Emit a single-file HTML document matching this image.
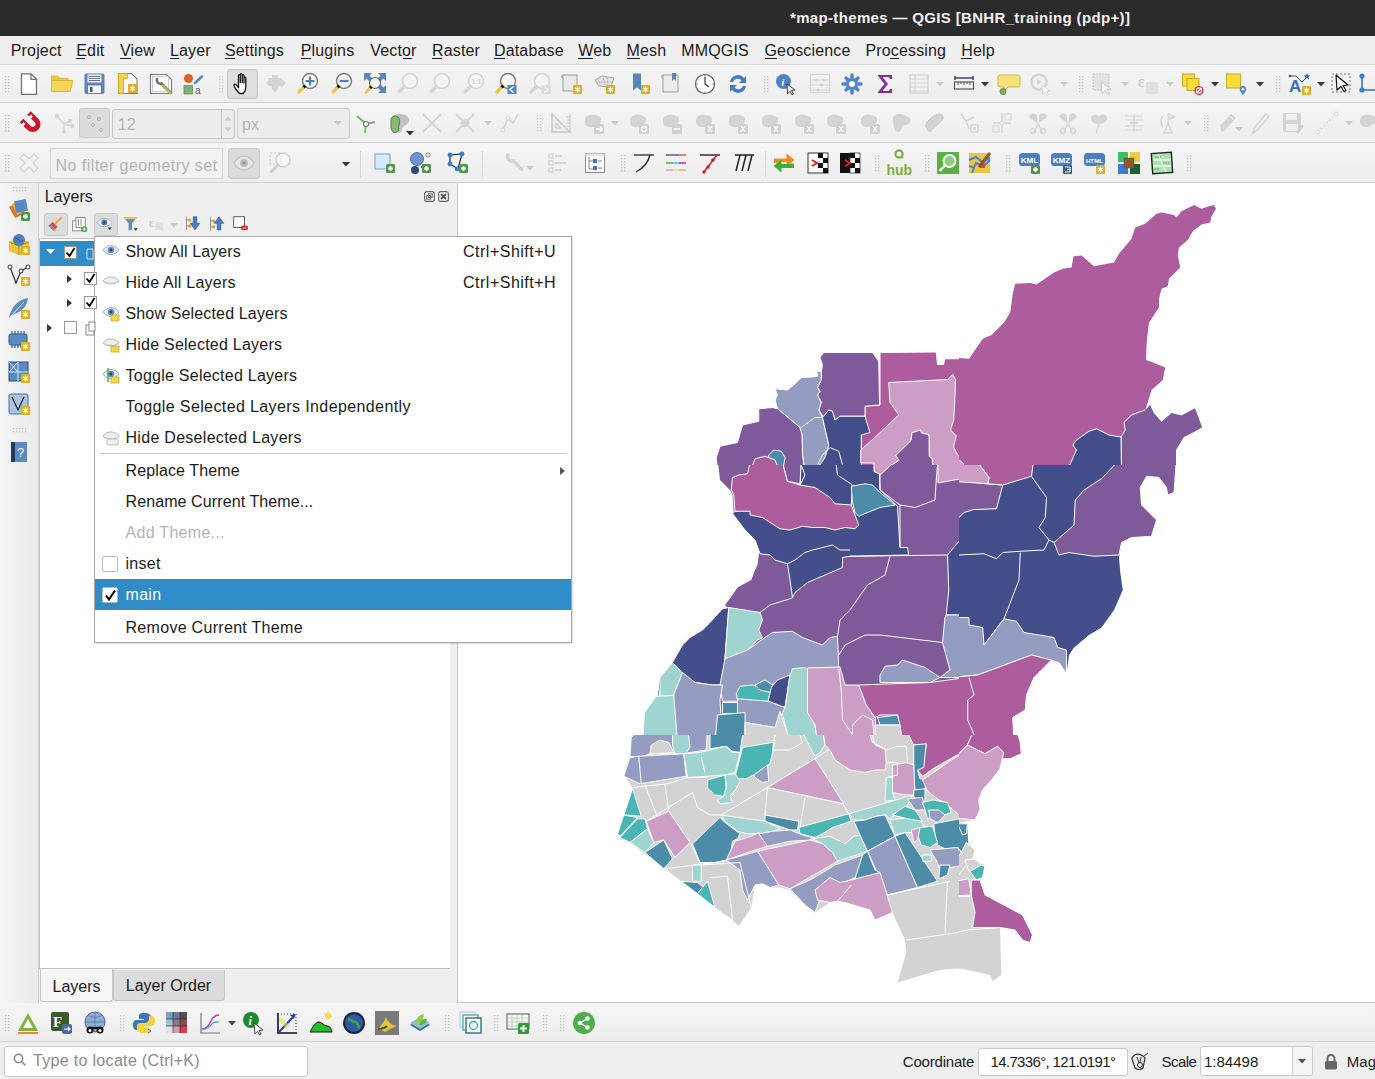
<!DOCTYPE html>
<html><head><meta charset="utf-8">
<style>
*{margin:0;padding:0;box-sizing:border-box}
html,body{width:1375px;height:1079px;overflow:hidden;background:#efefef;font-family:"Liberation Sans",sans-serif;color:#1b1b1b}
.a{position:absolute}
.t{position:absolute;white-space:nowrap}
svg{position:absolute;overflow:visible}
</style></head><body>
<div class="a" style="left:0px;top:0px;width:1375px;height:36px;background:#2b2b2b"></div>
<div class="t" style="left:790px;top:7.80px;font-size:15px;line-height:20px;color:#f0f0f0;font-weight:bold;letter-spacing:0.34px">*map-themes — QGIS [BNHR_training (pdp+)]</div>
<div class="a" style="left:0px;top:36px;width:1375px;height:29px;background:#efefef"></div>
<div class="a" style="left:0px;top:64px;width:1375px;height:1px;background:#d9d9d9"></div>
<div class="t" style="left:10.8px;top:41.46px;font-size:16px;line-height:20px;color:#1b1b1b;letter-spacing:0.15px">Project</div>
<div class="t" style="left:76.3px;top:41.46px;font-size:16px;line-height:20px;color:#1b1b1b;letter-spacing:0.15px">Edit</div>
<div class="t" style="left:120px;top:41.46px;font-size:16px;line-height:20px;color:#1b1b1b;letter-spacing:0.15px">View</div>
<div class="t" style="left:170px;top:41.46px;font-size:16px;line-height:20px;color:#1b1b1b;letter-spacing:0.15px">Layer</div>
<div class="t" style="left:225px;top:41.46px;font-size:16px;line-height:20px;color:#1b1b1b;letter-spacing:0.15px">Settings</div>
<div class="t" style="left:300.8px;top:41.46px;font-size:16px;line-height:20px;color:#1b1b1b;letter-spacing:0.15px">Plugins</div>
<div class="t" style="left:370.3px;top:41.46px;font-size:16px;line-height:20px;color:#1b1b1b;letter-spacing:0.15px">Vector</div>
<div class="t" style="left:432px;top:41.46px;font-size:16px;line-height:20px;color:#1b1b1b;letter-spacing:0.15px">Raster</div>
<div class="t" style="left:494px;top:41.46px;font-size:16px;line-height:20px;color:#1b1b1b;letter-spacing:0.15px">Database</div>
<div class="t" style="left:578.3px;top:41.46px;font-size:16px;line-height:20px;color:#1b1b1b;letter-spacing:0.15px">Web</div>
<div class="t" style="left:626.5px;top:41.46px;font-size:16px;line-height:20px;color:#1b1b1b;letter-spacing:0.15px">Mesh</div>
<div class="t" style="left:681.3px;top:41.46px;font-size:16px;line-height:20px;color:#1b1b1b;letter-spacing:0.15px">MMQGIS</div>
<div class="t" style="left:764.5px;top:41.46px;font-size:16px;line-height:20px;color:#1b1b1b;letter-spacing:0.15px">Geoscience</div>
<div class="t" style="left:865.5px;top:41.46px;font-size:16px;line-height:20px;color:#1b1b1b;letter-spacing:0.15px">Processing</div>
<div class="t" style="left:961.3px;top:41.46px;font-size:16px;line-height:20px;color:#1b1b1b;letter-spacing:0.15px">Help</div>
<div class="a" style="left:76.3px;top:58px;width:9px;height:1px;background:#1b1b1b"></div>
<div class="a" style="left:120px;top:58px;width:11px;height:1px;background:#1b1b1b"></div>
<div class="a" style="left:170px;top:58px;width:9px;height:1px;background:#1b1b1b"></div>
<div class="a" style="left:225px;top:58px;width:10px;height:1px;background:#1b1b1b"></div>
<div class="a" style="left:300.8px;top:58px;width:10px;height:1px;background:#1b1b1b"></div>
<div class="a" style="left:403px;top:58px;width:9px;height:1px;background:#1b1b1b"></div>
<div class="a" style="left:432px;top:58px;width:10px;height:1px;background:#1b1b1b"></div>
<div class="a" style="left:494px;top:58px;width:11px;height:1px;background:#1b1b1b"></div>
<div class="a" style="left:578.3px;top:58px;width:15px;height:1px;background:#1b1b1b"></div>
<div class="a" style="left:626.5px;top:58px;width:13px;height:1px;background:#1b1b1b"></div>
<div class="a" style="left:764.5px;top:58px;width:12px;height:1px;background:#1b1b1b"></div>
<div class="a" style="left:890px;top:58px;width:9px;height:1px;background:#1b1b1b"></div>
<div class="a" style="left:961.3px;top:58px;width:11px;height:1px;background:#1b1b1b"></div>

<div class="a" style="left:0px;top:65px;width:1375px;height:38px;background:linear-gradient(#f5f5f5,#ededed)"></div>
<div class="a" style="left:0px;top:102px;width:1375px;height:1px;background:#d2d2d2"></div>
<div class="a" style="left:0px;top:103px;width:1375px;height:40px;background:linear-gradient(#f5f5f5,#ededed)"></div>
<div class="a" style="left:0px;top:142px;width:1375px;height:1px;background:#d2d2d2"></div>
<div class="a" style="left:0px;top:143px;width:1375px;height:40px;background:linear-gradient(#f5f5f5,#ededed)"></div>
<div class="a" style="left:0px;top:182px;width:1375px;height:1px;background:#d2d2d2"></div>
<div class="a" style="left:79px;top:108px;width:31px;height:30px;background:#dcdcdc;border:1px solid #c8c8c8;border-radius:3px"></div>
<div class="a" style="left:112px;top:109px;width:123px;height:30px;background:#ececec;border:1px solid #c4c4c4;border-radius:3px"></div>
<div class="a" style="left:221px;top:110px;width:1px;height:28px;background:#c4c4c4"></div>
<div class="t" style="left:117.8px;top:115.46px;font-size:16px;line-height:20px;color:#b4b4b4">12</div>
<div class="a" style="left:237px;top:108px;width:113px;height:31px;background:#ececec;border:1px solid #cdcdcd;border-radius:3px"></div>
<div class="t" style="left:242px;top:115.46px;font-size:16px;line-height:20px;color:#b4b4b4">px</div>
<div class="a" style="left:50px;top:148px;width:173px;height:31px;background:#f2f2f2;border:1px solid #d6d6d6"></div>
<div class="t" style="left:55.5px;top:155.66px;font-size:16px;line-height:20px;color:#b2b2b2;letter-spacing:0.45px">No filter geometry set</div>
<div class="a" style="left:228px;top:148px;width:32px;height:31px;background:#dcdcdc;border:1px solid #cacaca;border-radius:3px"></div>
<div class="a" style="left:227px;top:69px;width:31px;height:30px;background:#dedede;border:1px solid #c4c4c4;border-radius:3px"></div>
<div class="a" style="left:0px;top:183px;width:38px;height:820px;background:linear-gradient(90deg,#f4f4f4,#ebebeb)"></div>
<div class="a" style="left:38px;top:183px;width:1px;height:820px;background:#d4d4d4"></div>
<div class="a" style="left:39px;top:183px;width:418px;height:820px;background:#efefef"></div>
<div class="t" style="left:44.7px;top:186.76px;font-size:16px;line-height:20px;color:#1b1b1b">Layers</div>
<div class="a" style="left:44px;top:213px;width:24px;height:23px;background:#dcdcdc;border:1px solid #c6c6c6;border-radius:3px"></div>
<div class="a" style="left:94px;top:213px;width:24px;height:23px;background:#dcdcdc;border:1px solid #c6c6c6;border-radius:3px"></div>
<div class="a" style="left:39px;top:238px;width:412px;height:731px;background:#fff;border:1px solid #c2c2c2"></div>
<div class="a" style="left:40px;top:241px;width:410px;height:25px;background:#308cc6"></div>
<div class="a" style="left:113px;top:970px;width:112px;height:31px;background:#dcdcdc;border:1px solid #c6c6c6;border-top:none;border-radius:0 0 3px 3px"></div>
<div class="a" style="left:40px;top:969px;width:73px;height:33px;background:#f6f6f6;border:1px solid #c6c6c6;border-top:none;border-radius:0 0 3px 3px"></div>
<div class="t" style="left:52.5px;top:977.46px;font-size:16px;line-height:20px;color:#1b1b1b">Layers</div>
<div class="t" style="left:125.8px;top:976.26px;font-size:16px;line-height:20px;color:#1b1b1b">Layer Order</div>
<div class="a" style="left:450px;top:183px;width:7px;height:820px;background:#efefef"></div>
<div class="a" style="left:457px;top:183px;width:918px;height:820px;background:#fff"></div>
<div class="a" style="left:457px;top:183px;width:1px;height:820px;background:#c8c8c8"></div>
<div class="a" style="left:457px;top:1002px;width:918px;height:1px;background:#c8c8c8"></div>
<svg class="a" style="left:0;top:0" width="1375" height="1079" viewBox="0 0 1375 1079"><defs><clipPath id="c0"><rect x="615" y="195" width="344" height="270"/></clipPath><clipPath id="c1"><rect x="959" y="195" width="344" height="270"/></clipPath><clipPath id="c2"><rect x="615" y="465" width="344" height="270"/></clipPath><clipPath id="c3"><rect x="959" y="465" width="344" height="270"/></clipPath><clipPath id="c4"><rect x="615" y="735" width="344" height="270"/></clipPath><clipPath id="c5"><rect x="959" y="735" width="344" height="270"/></clipPath></defs><g clip-path="url(#c0)"><g transform="translate(615,195) scale(0.25)"><polygon fill="#ad5c9e" stroke="#fff" stroke-width="4" stroke-linejoin="round" points="1060,630 1285,628 1290,678 1315,678 1318,655 1405,655 1405,1109 985,1109 985,960 1000,900 1000,845 1060,840"/><polygon fill="#7e5a9b" stroke="#fff" stroke-width="4" stroke-linejoin="round" points="820,650 835,630 1030,630 1055,665 1058,840 1000,845 1000,885 900,885 880,900 870,865 855,860 835,890 815,860 825,830 810,800 820,785 810,770 825,740 825,705 830,680"/><polygon fill="#959cc2" stroke="#fff" stroke-width="4" stroke-linejoin="round" points="640,775 690,780 720,755 745,730 790,728 810,725 808,705 825,705 825,740 810,770 820,785 810,800 825,830 815,860 830,890 855,1000 840,1050 800,1109 760,1109 750,1040 748,960 740,930 710,905 680,880 650,855 640,820 650,800"/><polyline fill="none" stroke="#fff" stroke-width="4" stroke-linejoin="round" points="745,930 800,890 830,890"/><polygon fill="#7e5a9b" stroke="#fff" stroke-width="4" stroke-linejoin="round" points="410,1109 405,1050 420,1005 490,990 510,920 575,905 575,855 630,850 650,855 680,880 740,930 748,960 750,1040 760,1109"/><polygon fill="#434e8a" stroke="#fff" stroke-width="4" stroke-linejoin="round" points="830,890 855,860 870,865 880,900 900,885 1000,885 1020,950 985,960 985,1109 800,1109 840,1050 855,1000"/><polyline fill="none" stroke="#fff" stroke-width="4" stroke-linejoin="round" points="810,1079 830,1040 860,1010 895,1025 910,1079"/><polygon fill="#4d8ca8" stroke="#fff" stroke-width="4" stroke-linejoin="round" points="615,1040 635,1020 665,1025 680,1050 670,1109 615,1109"/><polygon fill="#ad5c9e" stroke="#fff" stroke-width="4" stroke-linejoin="round" points="540,1109 560,1055 600,1045 640,1060 660,1109"/><polygon fill="#cc9ec5" stroke="#fff" stroke-width="4" stroke-linejoin="round" points="1095,750 1330,738 1352,718 1362,740 1360,800 1355,900 1342,940 1365,963 1354,1008 1369,1038 1405,1072 1405,1109 1292,1109 1290,1109 1271,1109 1269,1054 1257,1046 1256,959 1225,951 1222,940 1188,951 1184,982 1123,1042 1136,1061 1063,1109 1036,1109 1036,1072 983,1072 983,1020 1050,960 1135,880 1100,830"/><polygon fill="#7e5a9b" stroke="#fff" stroke-width="4" stroke-linejoin="round" points="1063,1109 1136,1061 1123,1042 1184,982 1188,951 1222,940 1225,951 1256,959 1257,1046 1269,1054 1271,1109 1290,1109 1292,1109 1063,1109"/></g></g><g clip-path="url(#c1)"><g transform="translate(959,195) scale(0.25)"><polygon fill="#ad5c9e" points="-30,650 40,655 95,575 130,560 180,510 205,470 215,395 225,355 285,352 310,358 380,310 415,295 450,290 458,245 490,242 540,285 620,270 640,235 690,175 705,130 745,115 790,75 810,70 860,80 870,90 890,65 940,40 970,55 1000,45 1020,40 1028,55 1010,85 1005,110 970,118 935,145 915,180 880,210 875,240 885,290 865,310 840,335 835,365 810,375 800,415 800,450 760,510 755,550 750,600 748,660 770,668 825,690 815,740 770,780 755,830 745,860 690,880 660,910 665,940 648,968 600,960 550,935 520,945 470,980 455,1000 470,1020 440,1109 -30,1109"/><polygon fill="#7e5a9b" stroke="#fff" stroke-width="4" stroke-linejoin="round" points="648,968 665,940 660,910 690,880 745,860 765,835 780,870 810,905 850,870 890,880 945,850 975,930 940,950 900,970 870,1020 870,1109 650,1109"/><polygon fill="#434e8a" stroke="#fff" stroke-width="4" stroke-linejoin="round" points="470,980 520,945 550,935 600,960 648,968 650,1109 430,1109 470,1020 455,1000"/><polygon fill="#cc9ec5" stroke="#fff" stroke-width="4" stroke-linejoin="round" points="-30,1000 -30,1038 16,1072 30,1109 -30,1109"/></g></g><g clip-path="url(#c2)"><g transform="translate(615,465) scale(0.25)"><polygon fill="#7e5a9b" points="410,-30 420,60 460,100 470,120 475,190 490,220 520,260 560,300 580,340 575,360 570,400 560,420 545,460 490,490 470,520 440,560 450,570 430,575 380,630 350,660 300,690 270,720 230,790 180,850 170,930 130,990 110,1109 1405,1109 1405,-30"/><polygon fill="#434e8a" stroke="#fff" stroke-width="4" stroke-linejoin="round" points="745,-30 1055,-30 1060,100 1130,165 1140,330 1170,330 1175,360 940,365 910,370 910,410 840,440 770,470 720,510 710,530 700,460 690,395 640,380 620,360 580,355 560,300 520,260 490,220 470,195 480,185 700,150 740,80"/><polyline fill="none" stroke="#fff" stroke-width="4" stroke-linejoin="round" points="745,0 760,40 740,80"/><polyline fill="none" stroke="#fff" stroke-width="4" stroke-linejoin="round" points="885,0 890,40 950,80 945,160"/><polygon fill="#ad5c9e" stroke="#fff" stroke-width="4" stroke-linejoin="round" points="470,50 495,40 530,35 545,-30 665,-30 690,65 740,80 800,90 860,130 880,155 945,160 960,200 975,240 960,255 920,250 880,260 840,250 790,250 750,245 700,260 660,255 620,230 590,210 540,200 540,185 480,185 475,120 465,100"/><polygon fill="#7e5a9b" stroke="#fff" stroke-width="4" stroke-linejoin="round" points="665,-30 745,-30 740,75 690,65"/><polyline fill="none" stroke="#fff" stroke-width="4" stroke-linejoin="round" points="690,395 720,380 760,350 790,340 830,330 870,320 900,340 940,340"/><polygon fill="#4d8ca8" stroke="#fff" stroke-width="4" stroke-linejoin="round" points="945,85 1000,75 1030,80 1060,110 1085,130 1120,160 1060,170 1010,190 975,205 960,190 950,150"/><polyline fill="none" stroke="#fff" stroke-width="4" stroke-linejoin="round" points="1060,0 1060,100 1140,160 1200,170 1280,140 1285,60 1290,0"/><polyline fill="none" stroke="#fff" stroke-width="4" stroke-linejoin="round" points="1140,160 1140,330"/><polygon fill="#cc9ec5" stroke="#fff" stroke-width="4" stroke-linejoin="round" points="983,-30 983,-30 1036,-30 1036,26 1063,38 1136,-30 1123,-30 1184,-30 983,-30"/><polygon fill="#cc9ec5" stroke="#fff" stroke-width="4" stroke-linejoin="round" points="1292,-30 1405,-30 1405,72 1373,57 1292,72"/><polyline fill="none" stroke="#fff" stroke-width="4" stroke-linejoin="round" points="580,590 620,560 700,535 710,530"/><polyline fill="none" stroke="#fff" stroke-width="4" stroke-linejoin="round" points="890,685 900,620 940,580 1010,480 1080,440 1100,365"/><polyline fill="none" stroke="#fff" stroke-width="4" stroke-linejoin="round" points="940,365 1330,360 1375,360"/><polyline fill="none" stroke="#fff" stroke-width="4" stroke-linejoin="round" points="895,760 920,720 1000,680 1060,680 1310,710"/><polygon fill="#434e8a" stroke="#fff" stroke-width="4" stroke-linejoin="round" points="1330,360 1405,270 1405,600 1325,600 1335,500"/><polygon fill="#434e8a" stroke="#fff" stroke-width="4" stroke-linejoin="round" points="230,790 270,720 300,690 350,660 380,630 430,575 455,570 440,770 430,880 390,880 320,870 280,850 250,820"/><polygon fill="#9fd4d1" stroke="#fff" stroke-width="4" stroke-linejoin="round" points="455,570 580,590 590,620 575,660 590,690 570,700 530,740 470,775 440,775"/><polygon fill="#959cc2" stroke="#fff" stroke-width="4" stroke-linejoin="round" points="440,775 530,740 600,690 630,670 710,665 750,690 830,720 860,690 890,685 895,815 780,815 700,840 690,850 625,880 610,955 490,945 430,945 420,880"/><polygon fill="#9fd4d1" stroke="#fff" stroke-width="4" stroke-linejoin="round" points="180,850 230,790 270,830 235,920 180,930"/><polygon fill="#4d8ca8" stroke="#fff" stroke-width="4" stroke-linejoin="round" points="170,870 180,930 235,920 230,945 170,950"/><polygon fill="#959cc2" stroke="#fff" stroke-width="4" stroke-linejoin="round" points="235,920 270,830 320,870 390,880 430,880 420,940 430,1109 250,1109 230,960"/><polygon fill="#9fd4d1" stroke="#fff" stroke-width="4" stroke-linejoin="round" points="110,1109 118,990 165,925 235,922 250,1109"/><polygon fill="#4bb5b3" stroke="#fff" stroke-width="4" stroke-linejoin="round" points="485,915 500,885 550,880 580,890 600,880 625,890 610,955 560,950 490,940"/><polygon fill="#4d8ca8" stroke="#fff" stroke-width="4" stroke-linejoin="round" points="560,880 600,860 630,880 625,910 580,900"/><polygon fill="#434e8a" stroke="#fff" stroke-width="4" stroke-linejoin="round" points="610,955 625,890 650,860 700,840 680,970"/><polygon fill="#9fd4d1" stroke="#fff" stroke-width="4" stroke-linejoin="round" points="680,970 700,840 710,815 760,810 780,830 770,990 800,1040 810,1109 700,1109 665,980"/><polygon fill="#cc9ec5" stroke="#fff" stroke-width="4" stroke-linejoin="round" points="770,812 900,808 920,880 975,880 1005,960 1040,1010 1050,1109 810,1109 800,1040 770,990"/><polyline fill="none" stroke="#fff" stroke-width="4" stroke-linejoin="round" points="895,815 905,900 910,1020 950,1079"/><polygon fill="#959cc2" stroke="#fff" stroke-width="4" stroke-linejoin="round" points="1060,840 1080,805 1130,800 1150,780 1240,810 1300,850 1260,870 1060,870"/><polygon fill="#959cc2" stroke="#fff" stroke-width="4" stroke-linejoin="round" points="1325,600 1405,600 1405,850 1300,850 1340,820 1310,710 1320,610"/><polygon fill="#ad5c9e" stroke="#fff" stroke-width="4" stroke-linejoin="round" points="975,880 1260,870 1405,850 1405,1109 1150,1109 1130,1000 1060,1000 1040,1010 1005,960"/><polygon fill="#4d8ca8" stroke="#fff" stroke-width="4" stroke-linejoin="round" points="1050,1010 1130,1000 1140,1040 1060,1040"/><polygon fill="#4d8ca8" stroke="#fff" stroke-width="4" stroke-linejoin="round" points="430,950 495,950 490,995 430,995"/><polygon fill="#959cc2" stroke="#fff" stroke-width="4" stroke-linejoin="round" points="490,935 615,945 680,970 640,1050 520,1030 490,995"/><polygon fill="#4d8ca8" stroke="#fff" stroke-width="4" stroke-linejoin="round" points="410,1000 520,990 520,1109 400,1109"/><polygon fill="#d3d3d3" stroke="#fff" stroke-width="4" stroke-linejoin="round" points="520,1030 640,1050 660,985 700,1109 520,1109"/><polygon fill="#cc9ec5" stroke="#fff" stroke-width="4" stroke-linejoin="round" points="950,1040 990,1000 1030,1020 1040,1109 950,1109"/><polygon fill="#d3d3d3" stroke="#fff" stroke-width="4" stroke-linejoin="round" points="1040,1040 1140,1040 1150,1109 1040,1109"/></g></g><g clip-path="url(#c3)"><g transform="translate(959,465) scale(0.25)"><polygon fill="#434e8a" points="-30,180 20,190 60,178 150,175 175,80 290,45 300,-30 870,-30 860,110 835,120 830,90 800,50 750,45 725,90 730,160 790,220 770,285 690,290 650,310 640,370 645,430 655,500 620,580 570,650 520,680 460,730 440,760 430,835 400,790 280,760 130,820 -30,850"/><polygon fill="#7e5a9b" stroke="#fff" stroke-width="4" stroke-linejoin="round" points="380,310 460,240 465,140 500,100 570,55 650,-30 870,-30 860,110 835,120 830,90 800,50 750,45 725,90 730,160 790,220 770,285 690,290 650,310 640,360 540,365 440,350 400,360"/><polygon fill="#7e5a9b" stroke="#fff" stroke-width="4" stroke-linejoin="round" points="-30,60 110,75 175,80 150,175 60,178 20,190 -30,240"/><polygon fill="#ad5c9e" stroke="#fff" stroke-width="4" stroke-linejoin="round" points="60,-30 300,-30 290,45 175,80 115,75 120,50"/><polygon fill="#cc9ec5" stroke="#fff" stroke-width="4" stroke-linejoin="round" points="-30,-30 60,-30 120,50 115,75 -30,65"/><polyline fill="none" stroke="#fff" stroke-width="4" stroke-linejoin="round" points="290,45 350,130 345,210 320,250 360,300 380,310"/><polyline fill="none" stroke="#fff" stroke-width="4" stroke-linejoin="round" points="0,360 100,355 150,375 175,350 245,345 340,340 360,300"/><polyline fill="none" stroke="#fff" stroke-width="4" stroke-linejoin="round" points="245,350 240,460 180,615 100,720"/><polygon fill="#959cc2" stroke="#fff" stroke-width="4" stroke-linejoin="round" points="-30,610 40,610 40,640 95,650 100,720 180,615 230,625 260,670 380,690 395,730 430,740 430,835 400,790 290,760 75,840 -30,850"/><polygon fill="#ad5c9e" stroke="#fff" stroke-width="4" stroke-linejoin="round" points="-30,850 75,840 290,760 370,780 300,850 270,920 265,980 215,1010 220,1109 -30,1109"/><polyline fill="none" stroke="#fff" stroke-width="4" stroke-linejoin="round" points="40,850 60,920 35,940 35,1020 60,1079"/></g></g><g clip-path="url(#c4)"><g transform="translate(615,735) scale(0.25)"><polygon fill="#d3d3d3" points="70,-30 60,80 35,160 70,210 10,395 200,535 400,690 470,740 495,765 545,690 560,600 590,595 620,610 660,610 700,620 760,680 800,710 860,670 890,665 920,670 1020,700 1040,740 1110,710 1160,820 1165,870 1130,990 1230,960 1300,940 1405,930 1405,-30"/><polygon fill="#959cc2" stroke="#fff" stroke-width="4" stroke-linejoin="round" points="65,10 110,-30 370,-30 365,60 300,70 275,75 230,75 140,75 100,90 60,85"/><polygon fill="#d3d3d3" stroke="#fff" stroke-width="4" stroke-linejoin="round" points="140,75 145,40 180,20 215,30 235,70"/><polygon fill="#9fd4d1" stroke="#fff" stroke-width="4" stroke-linejoin="round" points="230,-30 290,-30 300,50 280,75 240,75 230,40"/><polygon fill="#959cc2" stroke="#fff" stroke-width="4" stroke-linejoin="round" points="60,90 95,85 275,75 285,165 100,195 35,165"/><polyline fill="none" stroke="#fff" stroke-width="4" stroke-linejoin="round" points="95,85 105,195"/><polygon fill="#4d8ca8" stroke="#fff" stroke-width="4" stroke-linejoin="round" points="380,-30 515,-30 500,70 470,65 445,45 380,55"/><polygon fill="#9fd4d1" stroke="#fff" stroke-width="4" stroke-linejoin="round" points="275,75 340,70 440,45 470,70 500,70 480,150 440,160 370,165 290,170"/><polyline fill="none" stroke="#fff" stroke-width="4" stroke-linejoin="round" points="345,90 360,150"/><polygon fill="#4bb5b3" stroke="#fff" stroke-width="4" stroke-linejoin="round" points="510,50 640,28 620,115 555,160 525,175 480,175 485,150"/><polygon fill="#959cc2" stroke="#fff" stroke-width="4" stroke-linejoin="round" points="555,160 610,120 615,185 590,190 560,170"/><polygon fill="#4bb5b3" stroke="#fff" stroke-width="4" stroke-linejoin="round" points="370,180 440,160 445,210 435,245 400,240 370,210"/><polygon fill="#9fd4d1" stroke="#fff" stroke-width="4" stroke-linejoin="round" points="440,160 480,155 500,185 485,215 460,245 470,270 420,275 410,260 435,245 445,210"/><polyline fill="none" stroke="#fff" stroke-width="4" stroke-linejoin="round" points="70,210 210,195 290,170 370,170"/><polyline fill="none" stroke="#fff" stroke-width="4" stroke-linejoin="round" points="125,345 310,230 330,290 380,320 425,320"/><polyline fill="none" stroke="#fff" stroke-width="4" stroke-linejoin="round" points="200,200 215,305"/><polyline fill="none" stroke="#fff" stroke-width="4" stroke-linejoin="round" points="120,200 170,330"/><polyline fill="none" stroke="#fff" stroke-width="4" stroke-linejoin="round" points="425,320 610,210 800,95 940,0"/><polyline fill="none" stroke="#fff" stroke-width="4" stroke-linejoin="round" points="610,210 915,275"/><polyline fill="none" stroke="#fff" stroke-width="4" stroke-linejoin="round" points="800,95 935,315"/><polyline fill="none" stroke="#fff" stroke-width="4" stroke-linejoin="round" points="610,210 600,320"/><polyline fill="none" stroke="#fff" stroke-width="4" stroke-linejoin="round" points="760,250 740,370"/><polyline fill="none" stroke="#fff" stroke-width="4" stroke-linejoin="round" points="640,0 630,60 700,60 750,30 740,0"/><polygon fill="#9fd4d1" stroke="#fff" stroke-width="4" stroke-linejoin="round" points="740,-30 830,-30 840,40 820,70 800,85 775,40"/><polygon fill="#cc9ec5" stroke="#fff" stroke-width="4" stroke-linejoin="round" points="830,-30 1010,-30 1030,30 1080,55 1085,110 1080,140 1040,140 1000,150 940,140 880,100 860,60 840,40"/><polygon fill="#cc9ec5" stroke="#fff" stroke-width="4" stroke-linejoin="round" points="610,210 800,95 915,275"/><polygon fill="#ad5c9e" stroke="#fff" stroke-width="4" stroke-linejoin="round" points="1160,-30 1405,-30 1405,60 1280,130 1230,165 1210,140 1225,130 1245,40 1195,40"/><polygon fill="#4d8ca8" stroke="#fff" stroke-width="4" stroke-linejoin="round" points="1195,40 1245,35 1235,130 1210,140 1220,175 1255,180 1240,215 1200,225 1195,175"/><polygon fill="#cc9ec5" stroke="#fff" stroke-width="4" stroke-linejoin="round" points="1110,120 1165,110 1195,120 1200,240 1160,240 1110,230"/><polygon fill="#cc9ec5" stroke="#fff" stroke-width="4" stroke-linejoin="round" points="1230,180 1405,60 1405,345 1330,280 1290,255 1250,225"/><polygon fill="#9fd4d1" stroke="#fff" stroke-width="4" stroke-linejoin="round" points="1085,170 1110,170 1110,230 1120,260 1080,265"/><polyline fill="none" stroke="#fff" stroke-width="4" stroke-linejoin="round" points="1030,0 1040,40 1085,60"/><polyline fill="none" stroke="#fff" stroke-width="4" stroke-linejoin="round" points="1085,60 1130,45 1165,45 1170,110"/><polyline fill="none" stroke="#fff" stroke-width="4" stroke-linejoin="round" points="1090,110 1130,110 1130,160 1085,170"/><polygon fill="#4d8ca8" stroke="#fff" stroke-width="4" stroke-linejoin="round" points="1195,220 1240,215 1240,265 1215,280 1195,245"/><polygon fill="#9fd4d1" stroke="#fff" stroke-width="4" stroke-linejoin="round" points="935,315 1040,285 1190,240 1160,300 1095,335 1085,320 1045,325 1000,340 960,340"/><polygon fill="#4bb5b3" stroke="#fff" stroke-width="4" stroke-linejoin="round" points="735,370 935,315 945,345 870,370 830,395 800,410 740,395"/><polygon fill="#4d8ca8" stroke="#fff" stroke-width="4" stroke-linejoin="round" points="600,320 735,345 730,380 700,380 600,345"/><polygon fill="#9fd4d1" stroke="#fff" stroke-width="4" stroke-linejoin="round" points="425,320 600,345 660,375 600,395 530,395 490,385 440,345"/><polygon fill="#4d8ca8" stroke="#fff" stroke-width="4" stroke-linejoin="round" points="310,435 420,330 440,350 500,395 490,415 470,425 465,460 475,480 445,500 400,510 340,510"/><polygon fill="#cc9ec5" stroke="#fff" stroke-width="4" stroke-linejoin="round" points="445,500 480,425 545,405 575,390 610,445 545,465"/><polygon fill="#959cc2" stroke="#fff" stroke-width="4" stroke-linejoin="round" points="575,395 630,385 700,380 750,400 790,410 780,420 700,425 610,445"/><polygon fill="#9fd4d1" stroke="#fff" stroke-width="4" stroke-linejoin="round" points="790,415 860,405 920,435 955,405 990,400 1010,465 890,505 850,470 830,435"/><polygon fill="#4d8ca8" stroke="#fff" stroke-width="4" stroke-linejoin="round" points="955,345 1000,340 1045,325 1080,320 1120,405 1010,465"/><polygon fill="#959cc2" stroke="#fff" stroke-width="4" stroke-linejoin="round" points="1010,465 1120,405 1210,610 1090,640"/><polygon fill="#4d8ca8" stroke="#fff" stroke-width="4" stroke-linejoin="round" points="1120,405 1160,390 1290,585 1210,610"/><polygon fill="#cc9ec5" stroke="#fff" stroke-width="4" stroke-linejoin="round" points="570,465 780,420 830,435 870,470 890,505 700,615 655,600"/><polygon fill="#959cc2" stroke="#fff" stroke-width="4" stroke-linejoin="round" points="445,500 570,465 655,600 620,610 590,595 560,600 530,660 510,620 500,540"/><polygon fill="#959cc2" stroke="#fff" stroke-width="4" stroke-linejoin="round" points="700,615 790,575 880,520 990,480 980,530 960,570 940,580 890,600 830,630 800,710 760,680"/><polygon fill="#4d8ca8" stroke="#fff" stroke-width="4" stroke-linejoin="round" points="960,575 990,480 1010,465 1040,540 1060,550 1000,580"/><polygon fill="#cc9ec5" stroke="#fff" stroke-width="4" stroke-linejoin="round" points="800,620 860,570 900,590 945,580 1060,550 1110,710 1040,740 1020,700 920,670 890,665 860,670 810,660"/><polyline fill="none" stroke="#fff" stroke-width="4" stroke-linejoin="round" points="890,665 945,600"/><polygon fill="#9fd4d1" stroke="#fff" stroke-width="4" stroke-linejoin="round" points="1100,340 1180,330 1220,340 1240,370 1210,390 1160,390 1120,400"/><polygon fill="#4bb5b3" stroke="#fff" stroke-width="4" stroke-linejoin="round" points="1110,320 1160,285 1200,300 1230,345 1170,335"/><polygon fill="#959cc2" stroke="#fff" stroke-width="4" stroke-linejoin="round" points="1170,255 1230,250 1240,300 1200,300"/><polygon fill="#4bb5b3" stroke="#fff" stroke-width="4" stroke-linejoin="round" points="1230,270 1270,260 1330,270 1345,310 1290,330 1250,335 1240,300"/><polygon fill="#959cc2" stroke="#fff" stroke-width="4" stroke-linejoin="round" points="1255,300 1295,300 1320,320 1290,350 1260,335"/><polygon fill="#4d8ca8" stroke="#fff" stroke-width="4" stroke-linejoin="round" points="1275,355 1405,330 1405,450 1320,455 1290,440 1280,400"/><polygon fill="#4bb5b3" stroke="#fff" stroke-width="4" stroke-linejoin="round" points="1220,370 1270,365 1290,430 1260,450 1225,440 1210,400"/><polygon fill="#cc9ec5" stroke="#fff" stroke-width="4" stroke-linejoin="round" points="1185,380 1220,370 1210,420 1195,430"/><polygon fill="#959cc2" stroke="#fff" stroke-width="4" stroke-linejoin="round" points="1260,460 1370,450 1405,520 1340,530 1310,575 1290,510"/><polygon fill="#9fd4d1" stroke="#fff" stroke-width="4" stroke-linejoin="round" points="1230,480 1265,480 1265,505 1230,505"/><polygon fill="#4d8ca8" stroke="#fff" stroke-width="4" stroke-linejoin="round" points="1300,520 1340,520 1330,560 1295,575"/><polygon fill="#4bb5b3" stroke="#fff" stroke-width="4" stroke-linejoin="round" points="70,215 105,325 35,320"/><polygon fill="#4bb5b3" stroke="#fff" stroke-width="4" stroke-linejoin="round" points="35,320 90,330 20,405 10,395"/><polygon fill="#4bb5b3" stroke="#fff" stroke-width="4" stroke-linejoin="round" points="90,335 120,335 130,375 60,430 20,410"/><polygon fill="#9fd4d1" stroke="#fff" stroke-width="4" stroke-linejoin="round" points="60,430 130,375 155,430 120,470"/><polygon fill="#4d8ca8" stroke="#fff" stroke-width="4" stroke-linejoin="round" points="120,470 195,420 230,495 195,535"/><polygon fill="#cc9ec5" stroke="#fff" stroke-width="4" stroke-linejoin="round" points="125,345 215,305 300,430 240,490 195,420 155,430"/><polyline fill="none" stroke="#fff" stroke-width="4" stroke-linejoin="round" points="200,535 440,505"/><polyline fill="none" stroke="#fff" stroke-width="4" stroke-linejoin="round" points="300,430 340,510"/><polygon fill="#9fd4d1" stroke="#fff" stroke-width="4" stroke-linejoin="round" points="310,520 345,520 345,585 310,585"/><polygon fill="#4d8ca8" stroke="#fff" stroke-width="4" stroke-linejoin="round" points="265,585 330,590 355,610 330,635"/><polygon fill="#4bb5b3" stroke="#fff" stroke-width="4" stroke-linejoin="round" points="330,635 370,585 400,690"/><polyline fill="none" stroke="#fff" stroke-width="4" stroke-linejoin="round" points="380,570 450,565 470,740"/><polyline fill="none" stroke="#fff" stroke-width="4" stroke-linejoin="round" points="345,520 500,510 545,690"/><polyline fill="none" stroke="#fff" stroke-width="4" stroke-linejoin="round" points="1090,640 1340,585"/><polyline fill="none" stroke="#fff" stroke-width="4" stroke-linejoin="round" points="1165,820 1375,790"/><polyline fill="none" stroke="#fff" stroke-width="4" stroke-linejoin="round" points="1330,585 1320,790"/></g></g><g clip-path="url(#c5)"><g transform="translate(880,735) scale(0.25)"><polygon fill="#d3d3d3" points="-30,-30 540,-30 565,30 565,75 520,95 490,95 480,135 450,175 410,220 395,260 400,300 380,340 320,350 350,360 355,430 380,460 370,500 420,520 410,560 400,580 370,575 365,600 420,640 570,720 610,800 600,830 570,820 540,780 480,770 485,960 450,985 440,960 330,935 260,940 70,990 110,830 100,790 40,710 -30,730"/><polygon fill="#ad5c9e" stroke="#fff" stroke-width="4" stroke-linejoin="round" points="100,-30 380,-30 350,40 180,210 170,200 150,170 155,140 185,100 185,35 135,45"/><polygon fill="#ad5c9e" stroke="#fff" stroke-width="4" stroke-linejoin="round" points="350,40 380,-30 540,-30 560,25 565,75 520,95 490,95 470,45 420,75"/><polygon fill="#4d8ca8" stroke="#fff" stroke-width="4" stroke-linejoin="round" points="135,45 185,35 185,100 155,140 150,170 220,150 175,205 170,250 150,270 130,220 135,140 140,70"/><polygon fill="#cc9ec5" stroke="#fff" stroke-width="4" stroke-linejoin="round" points="180,210 350,40 420,75 470,45 495,70 480,135 450,175 410,220 395,260 400,300 380,340 290,330 270,275 250,260 200,255"/><polygon fill="#cc9ec5" stroke="#fff" stroke-width="4" stroke-linejoin="round" points="55,160 130,120 135,240 60,250"/><polygon fill="#9fd4d1" stroke="#fff" stroke-width="4" stroke-linejoin="round" points="20,170 50,175 55,250 20,265"/><polygon fill="#cc9ec5" stroke="#fff" stroke-width="4" stroke-linejoin="round" points="-30,60 30,60 30,130 -30,130"/><polygon fill="#9fd4d1" stroke="#fff" stroke-width="4" stroke-linejoin="round" points="-30,290 130,245 110,280 50,320 40,330"/><polygon fill="#959cc2" stroke="#fff" stroke-width="4" stroke-linejoin="round" points="110,250 150,270 170,250 185,260 165,300 150,330 120,300"/><polygon fill="#4bb5b3" stroke="#fff" stroke-width="4" stroke-linejoin="round" points="50,320 110,280 120,300 150,330 140,345 100,340"/><polygon fill="#4bb5b3" stroke="#fff" stroke-width="4" stroke-linejoin="round" points="165,300 185,260 210,270 205,310 185,330"/><polygon fill="#4bb5b3" stroke="#fff" stroke-width="4" stroke-linejoin="round" points="210,265 255,260 285,310 250,330 215,315"/><polygon fill="#959cc2" stroke="#fff" stroke-width="4" stroke-linejoin="round" points="195,320 215,315 250,330 240,350 215,350"/><polygon fill="#9fd4d1" stroke="#fff" stroke-width="4" stroke-linejoin="round" points="40,340 100,340 150,345 160,360 140,375 70,395"/><polygon fill="#9fd4d1" stroke="#fff" stroke-width="4" stroke-linejoin="round" points="150,335 190,335 195,355 165,360"/><polygon fill="#4d8ca8" stroke="#fff" stroke-width="4" stroke-linejoin="round" points="215,360 290,325 320,350 350,355 355,430 325,470 305,440 230,440"/><polygon fill="#4d8ca8" stroke="#fff" stroke-width="4" stroke-linejoin="round" points="310,355 350,355 345,395 330,400"/><polygon fill="#4bb5b3" stroke="#fff" stroke-width="4" stroke-linejoin="round" points="160,360 215,360 230,440 195,450 165,420"/><polygon fill="#959cc2" stroke="#fff" stroke-width="4" stroke-linejoin="round" points="205,455 305,440 325,470 290,530 255,500 220,480"/><polygon fill="#4d8ca8" stroke="#fff" stroke-width="4" stroke-linejoin="round" points="-30,320 40,330 65,410 -30,440"/><polygon fill="#959cc2" stroke="#fff" stroke-width="4" stroke-linejoin="round" points="-30,440 65,410 155,605 30,640 -30,570"/><polygon fill="#4d8ca8" stroke="#fff" stroke-width="4" stroke-linejoin="round" points="65,410 120,385 225,590 155,605"/><polygon fill="#cc9ec5" stroke="#fff" stroke-width="4" stroke-linejoin="round" points="120,385 160,370 155,420 140,430"/><polygon fill="#9fd4d1" stroke="#fff" stroke-width="4" stroke-linejoin="round" points="140,430 165,420 195,480 175,485"/><polygon fill="#4bb5b3" stroke="#fff" stroke-width="4" stroke-linejoin="round" points="170,485 205,480 210,500 180,510"/><polygon fill="#959cc2" stroke="#fff" stroke-width="4" stroke-linejoin="round" points="195,500 220,480 255,500 245,520 230,570"/><polygon fill="#4d8ca8" stroke="#fff" stroke-width="4" stroke-linejoin="round" points="245,520 280,530 265,570 235,575"/><polygon fill="#d3d3d3" stroke="#fff" stroke-width="4" stroke-linejoin="round" points="280,530 325,470 345,430 380,460 370,500 330,540 300,580"/><polygon fill="#d3d3d3" stroke="#fff" stroke-width="4" stroke-linejoin="round" points="340,500 380,495 410,525 385,550 355,545"/><polygon fill="#4bb5b3" stroke="#fff" stroke-width="4" stroke-linejoin="round" points="360,545 405,520 420,525 410,570 385,580"/><polygon fill="#cc9ec5" stroke="#fff" stroke-width="4" stroke-linejoin="round" points="280,590 355,575 365,640 285,645"/><polygon fill="#ad5c9e" stroke="#fff" stroke-width="4" stroke-linejoin="round" points="365,580 400,580 420,640 570,720 610,800 600,830 570,820 540,780 480,770 370,770 380,710 365,640"/><polygon fill="#cc9ec5" stroke="#fff" stroke-width="4" stroke-linejoin="round" points="-30,580 40,710 -30,730"/><polyline fill="none" stroke="#fff" stroke-width="4" stroke-linejoin="round" points="30,640 280,585"/><polyline fill="none" stroke="#fff" stroke-width="4" stroke-linejoin="round" points="105,830 350,780 480,770"/><polyline fill="none" stroke="#fff" stroke-width="4" stroke-linejoin="round" points="280,590 260,790"/><polyline fill="none" stroke="#fff" stroke-width="4" stroke-linejoin="round" points="285,645 360,645"/><polyline fill="none" stroke="#fff" stroke-width="4" stroke-linejoin="round" points="0,180 20,170"/></g></g></svg>
<div class="a" style="left:0px;top:1003px;width:1375px;height:38px;background:linear-gradient(#f5f5f5,#ededed)"></div>
<div class="a" style="left:0px;top:1041px;width:1375px;height:1px;background:#d2d2d2"></div>
<div class="a" style="left:0px;top:1042px;width:1375px;height:37px;background:#efefef"></div>
<div class="a" style="left:4px;top:1046px;width:304px;height:31px;background:#fff;border:1px solid #c9c9c9;border-radius:3px"></div>
<div class="t" style="left:33px;top:1051.46px;font-size:16px;line-height:20px;color:#8a8a8a;letter-spacing:0.32px">Type to locate (Ctrl+K)</div>
<div class="t" style="left:902.8px;top:1051.70px;font-size:15px;line-height:20px;color:#1b1b1b;letter-spacing:-0.2px">Coordinate</div>
<div class="a" style="left:978px;top:1048px;width:150px;height:28px;background:#fff;border:1px solid #c9c9c9;border-radius:3px"></div>
<div class="t" style="left:990.5px;top:1051.70px;font-size:15px;line-height:20px;color:#1b1b1b;letter-spacing:-0.65px">14.7336°, 121.0191°</div>
<div class="t" style="left:1161.4px;top:1051.70px;font-size:15px;line-height:20px;color:#1b1b1b;letter-spacing:-0.5px">Scale</div>
<div class="a" style="left:1200px;top:1046px;width:113px;height:30px;background:#fff;border:1px solid #c9c9c9;border-radius:3px"></div>
<div class="a" style="left:1292px;top:1047px;width:1px;height:28px;background:#d0d0d0"></div>
<div class="a" style="left:1293px;top:1047px;width:19px;height:28px;background:#f4f4f4;border-radius:0 3px 3px 0"></div>
<div class="t" style="left:1204px;top:1051.70px;font-size:15px;line-height:20px;color:#1b1b1b">1:84498</div>
<div class="t" style="left:1346.8px;top:1051.70px;font-size:15px;line-height:20px;color:#1b1b1b">Mag</div>
<div class="a" style="left:94px;top:236px;width:478px;height:407px;background:#fff;border:1px solid #a9a9a9;box-shadow:1px 1px 1px rgba(0,0,0,.12)"></div>
<div class="t" style="left:125.5px;top:242.16px;font-size:16px;line-height:20px;color:#1b1b1b;letter-spacing:0.1px">Show All Layers</div>
<div class="t" style="left:125.5px;top:273.06px;font-size:16px;line-height:20px;color:#1b1b1b;letter-spacing:0.23px">Hide All Layers</div>
<div class="t" style="left:125.5px;top:304.06px;font-size:16px;line-height:20px;color:#1b1b1b;letter-spacing:0.15px">Show Selected Layers</div>
<div class="t" style="left:125.5px;top:335.06px;font-size:16px;line-height:20px;color:#1b1b1b;letter-spacing:0.23px">Hide Selected Layers</div>
<div class="t" style="left:125.5px;top:365.96px;font-size:16px;line-height:20px;color:#1b1b1b;letter-spacing:0.25px">Toggle Selected Layers</div>
<div class="t" style="left:125.5px;top:396.66px;font-size:16px;line-height:20px;color:#1b1b1b;letter-spacing:0.39px">Toggle Selected Layers Independently</div>
<div class="t" style="left:125.5px;top:428.16px;font-size:16px;line-height:20px;color:#1b1b1b;letter-spacing:0.29px">Hide Deselected Layers</div>
<div class="t" style="left:125.5px;top:460.96px;font-size:16px;line-height:20px;color:#1b1b1b;letter-spacing:0.12px">Replace Theme</div>
<div class="t" style="left:125.5px;top:491.96px;font-size:16px;line-height:20px;color:#1b1b1b;letter-spacing:0.1px">Rename Current Theme...</div>
<div class="t" style="left:125.5px;top:522.86px;font-size:16px;line-height:20px;color:#b4b4b4;letter-spacing:0.3px">Add Theme...</div>
<div class="t" style="left:125.5px;top:553.86px;font-size:16px;line-height:20px;color:#1b1b1b;letter-spacing:0.3px">inset</div>
<div class="a" style="left:95px;top:579px;width:476px;height:31px;background:#308cc6"></div>
<div class="t" style="left:125.5px;top:585.06px;font-size:16px;line-height:20px;color:#ffffff;letter-spacing:0.3px">main</div>
<div class="t" style="left:125.5px;top:617.96px;font-size:16px;line-height:20px;color:#1b1b1b;letter-spacing:0.3px">Remove Current Theme</div>
<div class="t" style="left:463px;top:241.96px;font-size:16px;line-height:20px;color:#1b1b1b;letter-spacing:0.5px">Ctrl+Shift+U</div>
<div class="t" style="left:463px;top:273.06px;font-size:16px;line-height:20px;color:#1b1b1b;letter-spacing:0.5px">Ctrl+Shift+H</div>
<div class="a" style="left:99px;top:453px;width:468px;height:1px;background:#c9c9c9"></div>
<div class="a" style="left:102px;top:556px;width:16px;height:16px;background:#fff;border:1px solid #b9b9b9;border-radius:2px"></div>
<div class="a" style="left:102px;top:587px;width:16px;height:16px;background:#fff;border:1px solid #b9b9b9;border-radius:2px"></div>
<svg style="left:560px;top:467px" width="6" height="8"><path d="M0 0L5 4L0 8Z" fill="#555"/></svg>
<svg style="left:104px;top:589px" width="13" height="13"><path d="M2 6.5L5 10.5L11 1.5" stroke="#000" stroke-width="2" fill="none"/></svg>
<svg style="left:5px;top:76px" width="5" height="18" viewBox="0 0 5 18"><g fill="#c2c2c2"><rect x="0" y="0" width="1.3" height="1.3"/><rect x="3" y="0" width="1.3" height="1.3"/><rect x="0" y="3" width="1.3" height="1.3"/><rect x="3" y="3" width="1.3" height="1.3"/><rect x="0" y="6" width="1.3" height="1.3"/><rect x="3" y="6" width="1.3" height="1.3"/><rect x="0" y="9" width="1.3" height="1.3"/><rect x="3" y="9" width="1.3" height="1.3"/><rect x="0" y="12" width="1.3" height="1.3"/><rect x="3" y="12" width="1.3" height="1.3"/><rect x="0" y="15" width="1.3" height="1.3"/><rect x="3" y="15" width="1.3" height="1.3"/></g></svg>
<svg style="left:17px;top:72px" width="24" height="24" viewBox="0 0 24 24"><path d="M4.5 1.8h9.5l5.5 5.5v15h-15z" fill="#fff" stroke="#707070" stroke-width="1.3"/><path d="M14 1.8v5.5h5.5" fill="none" stroke="#707070" stroke-width="1.2"/></svg>
<svg style="left:50px;top:72px" width="24" height="24" viewBox="0 0 24 24"><path d="M1 3.5h7l2 2.2h8.5v3H1z" fill="#e9c43c"/><path d="M1.5 8.5h21.5l-3 11H1.5z" fill="#f6d659" stroke="#dcb53a" stroke-width="1"/></svg>
<svg style="left:83px;top:72px" width="24" height="24" viewBox="0 0 24 24"><rect x="1.5" y="1.5" width="20" height="20.5" rx="2" fill="#5a85ba"/><rect x="4.5" y="2.5" width="14" height="8" fill="#eef2f6"/><path d="M6 4.5h11M6 6.5h11M6 8.5h11" stroke="#5b6775" stroke-width="0.9"/><rect x="5" y="13.5" width="13" height="7.5" fill="#f2f4f7"/><rect x="7" y="15" width="2.5" height="5" fill="#3c5b82"/></svg>
<svg style="left:116px;top:72px" width="24" height="24" viewBox="0 0 24 24"><path d="M2.5 1.5h13l5.5 5.5v14.5h-18.5z" fill="#fff" stroke="#7a7a7a" stroke-width="1.1"/><path d="M2.5 1.5h9v5h-4v15h-5z" fill="#f3d34e" stroke="#c9a42b" stroke-width="0.8"/><rect x="12" y="12" width="9" height="9" rx="1" fill="#dcae22"/><path d="M16.5 13.6v5.8M14 15l5 2.9M14 17.9l5-2.9" stroke="#fff" stroke-width="1.2"/></svg>
<svg style="left:149px;top:72px" width="24" height="24" viewBox="0 0 24 24"><path d="M1.5 2.5h16l5 5v14h-21z" fill="#fff" stroke="#7a7a7a" stroke-width="1.1"/><rect x="3.5" y="4.5" width="16" height="15" fill="none" stroke="#b6bddb" stroke-width="0.8"/><path d="M8 7a3.5 3.5 0 0 0 4.5 4.5l8 8" stroke="#6f6f6f" stroke-width="2.6" fill="none" stroke-linecap="round"/><path d="M14 14l7 7" stroke="#c9b35a" stroke-width="2.8" stroke-linecap="round"/></svg>
<svg style="left:182px;top:72px" width="24" height="24" viewBox="0 0 24 24"><circle cx="6.5" cy="6.5" r="4.5" fill="#d9632a"/><path d="M13 11L20 4.5" stroke="#5d86bd" stroke-width="2.6" stroke-linecap="round"/><rect x="2" y="13.5" width="8.5" height="8.5" fill="#7fb07a" stroke="#5e9159" stroke-width="0.8"/><text x="13" y="21.5" font-family="Liberation Sans" font-size="10" fill="#555">a</text></svg>
<svg style="left:219px;top:76px" width="5" height="18" viewBox="0 0 5 18"><g fill="#c2c2c2"><rect x="0" y="0" width="1.3" height="1.3"/><rect x="3" y="0" width="1.3" height="1.3"/><rect x="0" y="3" width="1.3" height="1.3"/><rect x="3" y="3" width="1.3" height="1.3"/><rect x="0" y="6" width="1.3" height="1.3"/><rect x="3" y="6" width="1.3" height="1.3"/><rect x="0" y="9" width="1.3" height="1.3"/><rect x="3" y="9" width="1.3" height="1.3"/><rect x="0" y="12" width="1.3" height="1.3"/><rect x="3" y="12" width="1.3" height="1.3"/><rect x="0" y="15" width="1.3" height="1.3"/><rect x="3" y="15" width="1.3" height="1.3"/></g></svg>
<svg style="left:231px;top:72px" width="24" height="24" viewBox="0 0 24 24"><path d="M8.5 21.5c-2-2-5-6-5.5-8-.3-1.2 1.2-1.8 2-.8l2.5 3V3.5c0-1.2 1.8-1.2 1.8 0v7V2.5c0-1.2 1.9-1.2 1.9 0v8V3.5c0-1.2 1.8-1.2 1.8 0V11V6c0-1.2 1.8-1.2 1.8 0v9c0 3-1 5-2.5 6.5z" fill="#fff" stroke="#111" stroke-width="1.3" stroke-linejoin="round"/></svg>
<svg style="left:264px;top:72px" width="24" height="24" viewBox="0 0 24 24"><path d="M4 6h4V3h6v3h3l5 5-5 5v-2h-3v3l-3 4-3-4v-3H5l-3-3 3-3z" fill="#d4d4d4"/></svg>
<svg style="left:296px;top:72px" width="24" height="24" viewBox="0 0 24 24"><circle cx="14" cy="9" r="7.5" fill="#f7f7f7" stroke="#7a7a7a" stroke-width="1.4"/><path d="M8.8 14.2L3 20" stroke="#e8c84a" stroke-width="3.2" stroke-linecap="round"/><path d="M9.3 13.7L7.6 15.4" stroke="#111" stroke-width="3.2"/><path d="M14 4.5v9M9.5 9h9" stroke="#4f7fbd" stroke-width="2.2"/></svg>
<svg style="left:330px;top:72px" width="24" height="24" viewBox="0 0 24 24"><circle cx="14" cy="9" r="7.5" fill="#f7f7f7" stroke="#7a7a7a" stroke-width="1.4"/><path d="M8.8 14.2L3 20" stroke="#e8c84a" stroke-width="3.2" stroke-linecap="round"/><path d="M9.3 13.7L7.6 15.4" stroke="#111" stroke-width="3.2"/><path d="M9.5 9h9" stroke="#4f7fbd" stroke-width="2.2"/></svg>
<svg style="left:363px;top:72px" width="24" height="24" viewBox="0 0 24 24"><g fill="#5a85ba"><path d="M1 1h8l-2.5 2.5 3 3-3 3-3-3L1 9z"/><path d="M23 1h-8l2.5 2.5-3 3 3 3 3-3L23 9z"/><path d="M23 21h-8l2.5-2.5-3-3 3-3 3 3L23 13z"/></g><circle cx="12" cy="11" r="5.5" fill="#f2f2f2" stroke="#666" stroke-width="1.2"/><path d="M8 15L3 20.5" stroke="#e8c84a" stroke-width="3" stroke-linecap="round"/><path d="M8.5 14.5L7 16" stroke="#111" stroke-width="3"/></svg>
<svg style="left:396px;top:72px" width="24" height="24" viewBox="0 0 24 24"><circle cx="14" cy="9" r="7.5" fill="#f4f4f4" stroke="#d4d4d4" stroke-width="1.6"/><path d="M8.5 14.5L3 20" stroke="#d4d4d4" stroke-width="3.2" stroke-linecap="round"/></svg>
<svg style="left:428px;top:72px" width="24" height="24" viewBox="0 0 24 24"><circle cx="14" cy="9" r="7.5" fill="#f4f4f4" stroke="#d4d4d4" stroke-width="1.6"/><path d="M8.5 14.5L3 20" stroke="#d4d4d4" stroke-width="3.2" stroke-linecap="round"/></svg>
<svg style="left:462px;top:72px" width="24" height="24" viewBox="0 0 24 24"><circle cx="14" cy="9" r="7.5" fill="#f4f4f4" stroke="#d4d4d4" stroke-width="1.6"/><path d="M8.5 14.5L3 20" stroke="#d4d4d4" stroke-width="3.2" stroke-linecap="round"/><text x="9.5" y="12" font-family="Liberation Sans" font-size="7" fill="#c8c8c8">1:1</text></svg>
<svg style="left:494px;top:72px" width="24" height="24" viewBox="0 0 24 24"><circle cx="14" cy="9" r="7.5" fill="#f7f7f7" stroke="#7a7a7a" stroke-width="1.4"/><path d="M8.8 14.2L3 20" stroke="#e8c84a" stroke-width="3.2" stroke-linecap="round"/><path d="M9.3 13.7L7.6 15.4" stroke="#111" stroke-width="3.2"/><rect x="13.5" y="13" width="9" height="9" fill="#5a85ba"/><path d="M19.5 14.5l-3.5 3 3.5 3" stroke="#fff" stroke-width="1.5" fill="none"/></svg>
<svg style="left:528px;top:72px" width="24" height="24" viewBox="0 0 24 24"><circle cx="14" cy="9" r="7.5" fill="#f4f4f4" stroke="#d4d4d4" stroke-width="1.6"/><path d="M8.5 14.5L3 20" stroke="#d4d4d4" stroke-width="3.2" stroke-linecap="round"/><rect x="13.5" y="13" width="9" height="9" fill="#dadada"/><path d="M16.5 14.5l3.5 3-3.5 3" stroke="#fff" stroke-width="1.5" fill="none"/></svg>
<svg style="left:560px;top:72px" width="24" height="24" viewBox="0 0 24 24"><path d="M3 3h14v16H3z" fill="#e9e9e9" stroke="#9b9b9b" stroke-width="1"/><path d="M3 3c-2 0-2 3 0 3" fill="none" stroke="#9b9b9b"/><rect x="13" y="13" width="9" height="9" rx="1" fill="#dcae22"/><path d="M17.5 14.6v5.8M15 16l5 2.9M15 18.9l5-2.9" stroke="#fff" stroke-width="1.2"/></svg>
<svg style="left:593px;top:72px" width="24" height="24" viewBox="0 0 24 24"><path d="M2 8l7-4 12 2-3 9-12-1z" fill="#e5e5e5" stroke="#a5a5a5" stroke-width="1"/><path d="M5 7l3 6M10 5l2 8M14 6l1 8M3 10h16" stroke="#b5b5b5" stroke-width=".7"/><rect x="13" y="13" width="9" height="9" rx="1" fill="#dcae22"/><path d="M17.5 14.6v5.8M15 16l5 2.9M15 18.9l5-2.9" stroke="#fff" stroke-width="1.2"/></svg>
<svg style="left:629px;top:72px" width="24" height="24" viewBox="0 0 24 24"><path d="M4 1.5h8v17l-4-3-4 3z" fill="#5a85ba"/><rect x="12" y="13" width="9" height="9" rx="1" fill="#dcae22"/><path d="M16.5 14.6v5.8M14 16l5 2.9M14 18.9l5-2.9" stroke="#fff" stroke-width="1.2"/></svg>
<svg style="left:660px;top:72px" width="24" height="24" viewBox="0 0 24 24"><path d="M3 3h15v17H3z" fill="#ececec" stroke="#9b9b9b" stroke-width="1"/><path d="M3 3c-2 0-2 3 0 3" fill="none" stroke="#9b9b9b"/><path d="M12 1h4v8l-2-2-2 2z" fill="#5a85ba"/></svg>
<svg style="left:693px;top:72px" width="24" height="24" viewBox="0 0 24 24"><circle cx="12" cy="12" r="9.5" fill="#fff" stroke="#5f5f5f" stroke-width="1.2"/><path d="M12 5v7l4 3" stroke="#444" stroke-width="1.3" fill="none"/><path d="M12 3v1.5M21 12h-1.5M12 21v-1.5M3 12h1.5" stroke="#777"/></svg>
<svg style="left:726px;top:72px" width="24" height="24" viewBox="0 0 24 24"><path d="M4 10a8 8 0 0 1 14-4l2-2v7h-7l2.5-2.5A5 5 0 0 0 7 10z" fill="#3f7ec5"/><path d="M20 14a8 8 0 0 1-14 4l-2 2v-7h7l-2.5 2.5A5 5 0 0 0 17 14z" fill="#3f7ec5"/></svg>
<svg style="left:764px;top:76px" width="5" height="18" viewBox="0 0 5 18"><g fill="#c2c2c2"><rect x="0" y="0" width="1.3" height="1.3"/><rect x="3" y="0" width="1.3" height="1.3"/><rect x="0" y="3" width="1.3" height="1.3"/><rect x="3" y="3" width="1.3" height="1.3"/><rect x="0" y="6" width="1.3" height="1.3"/><rect x="3" y="6" width="1.3" height="1.3"/><rect x="0" y="9" width="1.3" height="1.3"/><rect x="3" y="9" width="1.3" height="1.3"/><rect x="0" y="12" width="1.3" height="1.3"/><rect x="3" y="12" width="1.3" height="1.3"/><rect x="0" y="15" width="1.3" height="1.3"/><rect x="3" y="15" width="1.3" height="1.3"/></g></svg>
<svg style="left:774px;top:72px" width="24" height="24" viewBox="0 0 24 24"><circle cx="9.5" cy="9.5" r="7.5" fill="#4d82c4"/><text x="7.3" y="14" font-family="Liberation Serif" font-style="italic" font-weight="bold" font-size="11" fill="#fff">i</text><path d="M13 12l8 6-3.5.5 2 3.5-1.5.8-2-3.5-2.5 2.5z" fill="#fff" stroke="#222" stroke-width=".9"/></svg>
<svg style="left:808px;top:72px" width="24" height="24" viewBox="0 0 24 24"><rect x="2.5" y="2.5" width="19" height="18" fill="none" stroke="#d4d4d4" stroke-width="1.3"/><path d="M3 8h18M3 13h18M3 18h18" stroke="#d4d4d4"/><g fill="#d4d4d4"><circle cx="8" cy="8" r="1.6"/><circle cx="13" cy="13" r="1.6"/><circle cx="10" cy="18" r="1.6"/><circle cx="16" cy="8" r="1.6"/></g></svg>
<svg style="left:840px;top:72px" width="24" height="24" viewBox="0 0 24 24"><g fill="#4f86c8"><circle cx="12" cy="12" r="6"/><path d="M10.5 1.5h3l.5 5h-4zM10.5 22.5h3l.5-5h-4zM1.5 10.5v3l5 .5v-4zM22.5 10.5v3l-5 .5v-4zM4 6l2-2 4 3-3 3zM20 18l-2 2-4-3 3-3zM18 4l2 2-3 4-3-3zM6 20l-2-2 3-4 3 3z"/></g><circle cx="12" cy="12" r="3" fill="#fff"/></svg>
<svg style="left:873px;top:72px" width="24" height="24" viewBox="0 0 24 24"><path d="M5 3h14v4h-2l-1-2H9.5l5.5 7-5.5 7H16l1-2h2v4H5v-1l6.5-8L5 4z" fill="#8a2d9c"/></svg>
<svg style="left:907px;top:72px" width="24" height="24" viewBox="0 0 24 24"><rect x="3" y="3" width="18" height="18" fill="none" stroke="#d4d4d4" stroke-width="1.3"/><path d="M3 7h18M3 11h18M3 15h18M3 19h18M8 3v18" stroke="#d4d4d4"/></svg>
<svg style="left:936px;top:82px" width="8" height="5" viewBox="0 0 8 5"><path d="M0 0H8L4 4.5Z" fill="#c9c9c9"/></svg>
<svg style="left:952px;top:72px" width="24" height="24" viewBox="0 0 24 24"><path d="M3 6h18" stroke="#3b4a66" stroke-width="1.5"/><path d="M3 4v4M21 4v4" stroke="#3b4a66" stroke-width="1.5"/><rect x="2.5" y="10" width="19" height="7" fill="#f4f4f4" stroke="#555" stroke-width="1.2"/><path d="M6 10v3M9 10v2M12 10v3M15 10v2M18 10v3" stroke="#555"/></svg>
<svg style="left:981px;top:82px" width="8" height="5" viewBox="0 0 8 5"><path d="M0 0H8L4 4.5Z" fill="#3a3a3a"/></svg>
<svg style="left:997px;top:72px" width="24" height="24" viewBox="0 0 24 24"><path d="M3 3h18a2 2 0 0 1 2 2v8a2 2 0 0 1-2 2H11l-4 4v-4H3a2 2 0 0 1-2-2V5a2 2 0 0 1 2-2z" fill="#f7e27a" stroke="#d3b93c" stroke-width="1"/><circle cx="6" cy="19.5" r="3" fill="#7cb36b" stroke="#4a7a3e" stroke-width=".8"/></svg>
<svg style="left:1029px;top:72px" width="24" height="24" viewBox="0 0 24 24"><circle cx="10" cy="10" r="7.5" fill="none" stroke="#d4d4d4" stroke-width="2.5"/><path d="M8 7l5 3-5 3z" fill="#d4d4d4"/><path d="M13 13l8 6-3.5.5 2 3.5-1.5.8-2-3.5-2.5 2.5z" fill="#fff" stroke="#d4d4d4" stroke-width="1"/></svg>
<svg style="left:1060px;top:82px" width="8" height="5" viewBox="0 0 8 5"><path d="M0 0H8L4 4.5Z" fill="#cbcbcb"/></svg>
<svg style="left:1079px;top:76px" width="5" height="18" viewBox="0 0 5 18"><g fill="#c2c2c2"><rect x="0" y="0" width="1.3" height="1.3"/><rect x="3" y="0" width="1.3" height="1.3"/><rect x="0" y="3" width="1.3" height="1.3"/><rect x="3" y="3" width="1.3" height="1.3"/><rect x="0" y="6" width="1.3" height="1.3"/><rect x="3" y="6" width="1.3" height="1.3"/><rect x="0" y="9" width="1.3" height="1.3"/><rect x="3" y="9" width="1.3" height="1.3"/><rect x="0" y="12" width="1.3" height="1.3"/><rect x="3" y="12" width="1.3" height="1.3"/><rect x="0" y="15" width="1.3" height="1.3"/><rect x="3" y="15" width="1.3" height="1.3"/></g></svg>
<svg style="left:1091px;top:72px" width="24" height="24" viewBox="0 0 24 24"><rect x="2" y="2" width="16" height="16" fill="#e3e3e3" stroke="#c4c4c4" stroke-width="1" stroke-dasharray="2 1"/><path d="M10 10l10 7-4 .5 2.5 4-1.8 1-2.5-4-3 3z" fill="#fff" stroke="#c6c6c6" stroke-width="1"/></svg>
<svg style="left:1121px;top:82px" width="8" height="5" viewBox="0 0 8 5"><path d="M0 0H8L4 4.5Z" fill="#cbcbcb"/></svg>
<svg style="left:1136px;top:72px" width="24" height="24" viewBox="0 0 24 24"><rect x="10" y="10" width="12" height="12" fill="#e0e0e0"/><text x="2" y="15" font-family="Liberation Serif" font-size="16" fill="#c4c4c4">&#949;</text></svg>
<svg style="left:1166px;top:82px" width="8" height="5" viewBox="0 0 8 5"><path d="M0 0H8L4 4.5Z" fill="#cbcbcb"/></svg>
<svg style="left:1181px;top:72px" width="24" height="24" viewBox="0 0 24 24"><rect x="1.5" y="2" width="12" height="12" fill="#f8dc3c" stroke="#c8a81e" stroke-width="1"/><rect x="6" y="6.5" width="12" height="12" fill="#f8dc3c" stroke="#c8a81e" stroke-width="1"/><circle cx="18" cy="18.5" r="4.5" fill="#d9262c"/><path d="M15.5 21l5-5" stroke="#fff" stroke-width="1.4"/><circle cx="18" cy="18.5" r="2.6" fill="none" stroke="#fff" stroke-width="1.1"/></svg>
<svg style="left:1210.5px;top:82px" width="8" height="5" viewBox="0 0 8 5"><path d="M0 0H8L4 4.5Z" fill="#3a3a3a"/></svg>
<svg style="left:1225px;top:72px" width="24" height="24" viewBox="0 0 24 24"><rect x="1.5" y="2" width="14" height="14" fill="#f8dc3c" stroke="#c8a81e" stroke-width="1"/><path d="M18 14a3.2 3.2 0 0 1 3.2 3.2c0 2.4-3.2 5.8-3.2 5.8s-3.2-3.4-3.2-5.8A3.2 3.2 0 0 1 18 14z" fill="#5d86b5"/><circle cx="18" cy="17.2" r="1.2" fill="#fff"/></svg>
<svg style="left:1255.5px;top:82px" width="8" height="5" viewBox="0 0 8 5"><path d="M0 0H8L4 4.5Z" fill="#3a3a3a"/></svg>
<svg style="left:1276px;top:76px" width="5" height="18" viewBox="0 0 5 18"><g fill="#c2c2c2"><rect x="0" y="0" width="1.3" height="1.3"/><rect x="3" y="0" width="1.3" height="1.3"/><rect x="0" y="3" width="1.3" height="1.3"/><rect x="3" y="3" width="1.3" height="1.3"/><rect x="0" y="6" width="1.3" height="1.3"/><rect x="3" y="6" width="1.3" height="1.3"/><rect x="0" y="9" width="1.3" height="1.3"/><rect x="3" y="9" width="1.3" height="1.3"/><rect x="0" y="12" width="1.3" height="1.3"/><rect x="3" y="12" width="1.3" height="1.3"/><rect x="0" y="15" width="1.3" height="1.3"/><rect x="3" y="15" width="1.3" height="1.3"/></g></svg>
<svg style="left:1288px;top:72px" width="24" height="24" viewBox="0 0 24 24"><text x="1" y="20" font-family="Liberation Sans" font-weight="bold" font-size="17" fill="#3b6fb0">A</text><path d="M2 4l6 0 6 6 4-4" stroke="#3b5c8a" stroke-width="1" fill="none"/><circle cx="2" cy="4" r="1.3" fill="#3b5c8a"/><path d="M19 1l1 2.3 2.5.2-1.9 1.6.6 2.4-2.2-1.3-2.2 1.3.6-2.4-1.9-1.6 2.5-.2z" fill="#3b6fb0"/><rect x="14" y="14" width="9" height="9" rx="1" fill="#dcae22"/><path d="M18.5 15.6v5.8M16 17l5 2.9M16 19.9l5-2.9" stroke="#fff" stroke-width="1.2"/></svg>
<svg style="left:1317px;top:82px" width="8" height="5" viewBox="0 0 8 5"><path d="M0 0H8L4 4.5Z" fill="#3a3a3a"/></svg>
<svg style="left:1330px;top:72px" width="24" height="24" viewBox="0 0 24 24"><rect x="2" y="2" width="18" height="18" fill="none" stroke="#777" stroke-width="1" stroke-dasharray="2 2"/><path d="M6 3l12 10-5 .5 3 5-2 1-3-5-4 3.5z" fill="#fff" stroke="#111" stroke-width="1.2" stroke-linejoin="round"/></svg>
<svg style="left:1358px;top:72px" width="24" height="24" viewBox="0 0 24 24"><path d="M4 4L4 18L18 18" stroke="#3b6fb0" stroke-width="1.6" fill="none"/><circle cx="4" cy="4" r="2.6" fill="#3b7fd0"/><circle cx="4" cy="18" r="2.6" fill="#3b7fd0"/></svg>
<svg style="left:5px;top:115px" width="5" height="18" viewBox="0 0 5 18"><g fill="#c2c2c2"><rect x="0" y="0" width="1.3" height="1.3"/><rect x="3" y="0" width="1.3" height="1.3"/><rect x="0" y="3" width="1.3" height="1.3"/><rect x="3" y="3" width="1.3" height="1.3"/><rect x="0" y="6" width="1.3" height="1.3"/><rect x="3" y="6" width="1.3" height="1.3"/><rect x="0" y="9" width="1.3" height="1.3"/><rect x="3" y="9" width="1.3" height="1.3"/><rect x="0" y="12" width="1.3" height="1.3"/><rect x="3" y="12" width="1.3" height="1.3"/><rect x="0" y="15" width="1.3" height="1.3"/><rect x="3" y="15" width="1.3" height="1.3"/></g></svg>
<svg style="left:17px;top:111px" width="24" height="24" viewBox="0 0 24 24"><g transform="translate(24,0) scale(-1,1)"><path d="M19.5 9.5l-7.5 7.5a5.3 5.3 0 0 1-7.5-7.5l7.5-7.5" fill="none" stroke="#c8182a" stroke-width="5"/><path d="M9 4.5l3 3M16.5 12l3 3" stroke="#fff" stroke-width="2.6"/></g></svg>
<svg style="left:52px;top:111px" width="24" height="24" viewBox="0 0 24 24"><path d="M5 5l7 8 6-3M12 13v8M12 13l8 2" stroke="#d4d4d4" stroke-width="1.5" fill="none"/><g fill="#d4d4d4"><circle cx="5" cy="5" r="2.2"/><circle cx="18" cy="10" r="2.2"/><circle cx="20" cy="15" r="2.2"/><circle cx="12" cy="21" r="2"/></g></svg>
<svg style="left:86px;top:113px" width="18" height="20" viewBox="0 0 18 20"><g fill="none" stroke="#b5b5b5" stroke-width="1"><circle cx="3" cy="4" r="1.5"/><circle cx="13" cy="6" r="1.5"/><circle cx="7" cy="12" r="1.5"/><circle cx="15" cy="17" r="1.5"/></g></svg>
<svg style="left:223px;top:114px" width="10" height="20" viewBox="0 0 10 20"><path d="M1.5 6.5L5 2.5L8.5 6.5ZM1.5 13.5L5 17.5L8.5 13.5Z" fill="#c8c8c8"/></svg>
<svg style="left:334px;top:121px" width="8" height="5" viewBox="0 0 8 5"><path d="M0 0H8L4 4.5Z" fill="#c6c6c6"/></svg>
<svg style="left:354px;top:111px" width="24" height="24" viewBox="0 0 24 24"><path d="M12 13L3 5M12 13l9-2M12 13l-1 9" stroke="#7cb36b" stroke-width="1.8"/><circle cx="12" cy="13" r="2.5" fill="#fff" stroke="#777" stroke-width="1.2"/></svg>
<svg style="left:388px;top:111px" width="24" height="24" viewBox="0 0 24 24"><path d="M4 6c2-3 9-4 13-2s5 5 3 8-6 3-6 7-6 3-8 0-4-9-2-13z" fill="#c2c2c2"/><path d="M3 8c1-3 5-4 7-2s2 5 1 8 1 5-2 7-6-1-6-5 0-5 0-8z" fill="#86bb74" stroke="#557a45" stroke-width="1"/></svg>
<svg style="left:405.5px;top:131px" width="8" height="5" viewBox="0 0 8 5"><path d="M0 0H8L4 4.5Z" fill="#333"/></svg>
<svg style="left:420px;top:111px" width="24" height="24" viewBox="0 0 24 24"><path d="M3 3l18 18M21 3L3 21" stroke="#d4d4d4" stroke-width="2"/></svg>
<svg style="left:453px;top:111px" width="24" height="24" viewBox="0 0 24 24"><path d="M3 3l18 18M21 3L3 21" stroke="#d4d4d4" stroke-width="2"/><path d="M7 12l5-5 5 5-5 5z" fill="#d4d4d4"/></svg>
<svg style="left:483.5px;top:121px" width="8" height="5" viewBox="0 0 8 5"><path d="M0 0H8L4 4.5Z" fill="#cbcbcb"/></svg>
<svg style="left:498px;top:111px" width="24" height="24" viewBox="0 0 24 24"><path d="M5 19l5-12 5 5 5-9" stroke="#d4d4d4" stroke-width="1.5" fill="none"/><g fill="#fff" stroke="#d4d4d4"><circle cx="5" cy="19" r="2"/><circle cx="10" cy="7" r="2"/></g></svg>
<svg style="left:537px;top:115px" width="5" height="18" viewBox="0 0 5 18"><g fill="#c2c2c2"><rect x="0" y="0" width="1.3" height="1.3"/><rect x="3" y="0" width="1.3" height="1.3"/><rect x="0" y="3" width="1.3" height="1.3"/><rect x="3" y="3" width="1.3" height="1.3"/><rect x="0" y="6" width="1.3" height="1.3"/><rect x="3" y="6" width="1.3" height="1.3"/><rect x="0" y="9" width="1.3" height="1.3"/><rect x="3" y="9" width="1.3" height="1.3"/><rect x="0" y="12" width="1.3" height="1.3"/><rect x="3" y="12" width="1.3" height="1.3"/><rect x="0" y="15" width="1.3" height="1.3"/><rect x="3" y="15" width="1.3" height="1.3"/></g></svg>
<svg style="left:549px;top:111px" width="24" height="24" viewBox="0 0 24 24"><path d="M3 21V3l18 18z" fill="#ececec" stroke="#c7c7c7" stroke-width="1.4"/><path d="M7 17v-5l5 5z" fill="none" stroke="#c7c7c7"/><path d="M21 3v18M17 6h4M18 9h3M17 12h4M18 15h3" stroke="#c7c7c7"/></svg>
<svg style="left:582px;top:111px" width="24" height="24" viewBox="0 0 24 24"><path d="M3 9c0-5 6-6 10-5s7 2 6 6-4 3-6 5-6 1-8 0-2-3-2-6z" fill="#d4d4d4"/><rect x="12" y="13" width="10" height="10" rx="1.5" fill="#d0d0d0"/><path d="M14 18h6M18 15.5l2.5 2.5-2.5 2.5" stroke="#fff" stroke-width="1.4" fill="none"/></svg>
<svg style="left:611px;top:121px" width="8" height="5" viewBox="0 0 8 5"><path d="M0 0H8L4 4.5Z" fill="#cbcbcb"/></svg>
<svg style="left:627px;top:111px" width="24" height="24" viewBox="0 0 24 24"><path d="M3 9c0-5 6-6 10-5s7 2 6 6-4 3-6 5-6 1-8 0-2-3-2-6z" fill="#d4d4d4"/><rect x="12" y="13" width="10" height="10" rx="1.5" fill="#d0d0d0"/><circle cx="17" cy="18" r="2.5" fill="none" stroke="#fff" stroke-width="1.3"/></svg>
<svg style="left:660px;top:111px" width="24" height="24" viewBox="0 0 24 24"><path d="M3 9c0-5 6-6 10-5s7 2 6 6-4 3-6 5-6 1-8 0-2-3-2-6z" fill="#d4d4d4"/><rect x="12" y="13" width="10" height="10" rx="1.5" fill="#d0d0d0"/><path d="M14 18h6" stroke="#fff" stroke-width="1.4"/></svg>
<svg style="left:693px;top:111px" width="24" height="24" viewBox="0 0 24 24"><path d="M3 9c0-5 6-6 10-5s7 2 6 6-4 3-6 5-6 1-8 0-2-3-2-6z" fill="#d4d4d4"/><rect x="12" y="13" width="10" height="10" rx="1.5" fill="#d0d0d0"/><path d="M15 15l4 6M19 15l-4 6" stroke="#fff" stroke-width="1.3"/></svg>
<svg style="left:726px;top:111px" width="24" height="24" viewBox="0 0 24 24"><path d="M3 9c0-5 6-6 10-5s7 2 6 6-4 3-6 5-6 1-8 0-2-3-2-6z" fill="#d4d4d4"/><rect x="12" y="13" width="10" height="10" rx="1.5" fill="#d0d0d0"/><path d="M15 15l4 6M19 15l-4 6" stroke="#fff" stroke-width="1.3"/></svg>
<svg style="left:759px;top:111px" width="24" height="24" viewBox="0 0 24 24"><path d="M3 9c0-5 6-6 10-5s7 2 6 6-4 3-6 5-6 1-8 0-2-3-2-6z" fill="#d4d4d4"/><rect x="12" y="13" width="10" height="10" rx="1.5" fill="#d0d0d0"/><path d="M15 15l4 6M19 15l-4 6" stroke="#fff" stroke-width="1.3"/></svg>
<svg style="left:792px;top:111px" width="24" height="24" viewBox="0 0 24 24"><path d="M3 9c0-5 6-6 10-5s7 2 6 6-4 3-6 5-6 1-8 0-2-3-2-6z" fill="#d4d4d4"/><rect x="12" y="13" width="10" height="10" rx="1.5" fill="#d0d0d0"/><path d="M15 15l4 6M19 15l-4 6" stroke="#fff" stroke-width="1.3"/></svg>
<svg style="left:824px;top:111px" width="24" height="24" viewBox="0 0 24 24"><path d="M3 9c0-5 6-6 10-5s7 2 6 6-4 3-6 5-6 1-8 0-2-3-2-6z" fill="#d4d4d4"/><rect x="12" y="13" width="10" height="10" rx="1.5" fill="#d0d0d0"/><path d="M15 15l4 6M19 15l-4 6" stroke="#fff" stroke-width="1.3"/></svg>
<svg style="left:858px;top:111px" width="24" height="24" viewBox="0 0 24 24"><path d="M3 9c0-5 6-6 10-5s7 2 6 6-4 3-6 5-6 1-8 0-2-3-2-6z" fill="#d4d4d4"/><rect x="12" y="13" width="10" height="10" rx="1.5" fill="#d0d0d0"/><path d="M15 15l4 6M19 15l-4 6" stroke="#fff" stroke-width="1.3"/></svg>
<svg style="left:890px;top:111px" width="24" height="24" viewBox="0 0 24 24"><path d="M3 8c0-5 7-6 11-4s8 3 6 7-5 2-7 4-1 6-5 6-5-8-5-13z" fill="#d4d4d4"/></svg>
<svg style="left:923px;top:111px" width="24" height="24" viewBox="0 0 24 24"><path d="M4 17c-3-3 0-6 3-9s6-5 9-5 6 3 3 6-7 7-10 10-4 1-5-2z" fill="#d4d4d4" stroke="#c9c9c9"/></svg>
<svg style="left:957px;top:111px" width="24" height="24" viewBox="0 0 24 24"><path d="M4 3l5 7 8-4M9 10l3 8" stroke="#d4d4d4" stroke-width="1.5" fill="none"/><rect x="13" y="13" width="9" height="9" rx="2" fill="#d8d8d8"/><circle cx="17.5" cy="17.5" r="2.3" fill="none" stroke="#fff" stroke-width="1.2"/></svg>
<svg style="left:990px;top:111px" width="24" height="24" viewBox="0 0 24 24"><path d="M12 2v20M3 12h18" stroke="#d4d4d4" stroke-width="1.5"/><rect x="15" y="3" width="6" height="6" fill="none" stroke="#d4d4d4"/><rect x="3" y="15" width="6" height="6" fill="none" stroke="#d4d4d4"/><circle cx="12" cy="12" r="2" fill="#fff" stroke="#d4d4d4"/></svg>
<svg style="left:1026px;top:111px" width="24" height="24" viewBox="0 0 24 24"><path d="M3 6c0-4 8-5 8 0v6M21 6c0-4-8-5-8 0v6" fill="#d4d4d4"/><path d="M8 21l4-9 4 9" stroke="#d4d4d4" stroke-width="1.5" fill="none"/><circle cx="7" cy="20" r="2.5" fill="none" stroke="#d4d4d4" stroke-width="1.3"/><circle cx="17" cy="20" r="2.5" fill="none" stroke="#d4d4d4" stroke-width="1.3"/></svg>
<svg style="left:1056px;top:111px" width="24" height="24" viewBox="0 0 24 24"><path d="M3 6c0-4 8-5 8 0v6M21 6c0-4-8-5-8 0v6" fill="#d4d4d4"/><path d="M8 21l4-9 4 9" stroke="#d4d4d4" stroke-width="1.5" fill="none"/><circle cx="7" cy="20" r="2.5" fill="none" stroke="#d4d4d4" stroke-width="1.3"/><circle cx="17" cy="20" r="2.5" fill="none" stroke="#d4d4d4" stroke-width="1.3"/></svg>
<svg style="left:1088px;top:111px" width="24" height="24" viewBox="0 0 24 24"><path d="M3 7c0-4 6-4 8-2 2-2 8-2 8 2s-4 6-8 6-8-2-8-6z" fill="#d4d4d4"/><path d="M11 13c0 4-4 6-2 9" stroke="#d4d4d4" stroke-width="1.4" fill="none"/></svg>
<svg style="left:1122px;top:111px" width="24" height="24" viewBox="0 0 24 24"><path d="M3 5h18M3 9h18M3 15h18M3 19h18M12 3v18" stroke="#d4d4d4" stroke-width="1.2"/><path d="M8 12h8" stroke="#d4d4d4" stroke-width="2"/></svg>
<svg style="left:1155px;top:111px" width="24" height="24" viewBox="0 0 24 24"><path d="M9 22l4-10 4 10z" fill="none" stroke="#d4d4d4" stroke-width="1.3"/><path d="M13 12V2l7 4-7 3" fill="#e2e2e2" stroke="#d4d4d4"/><path d="M8 5a8 8 0 0 0 0 11" fill="none" stroke="#d4d4d4" stroke-width="1.3"/></svg>
<svg style="left:1184px;top:121px" width="8" height="5" viewBox="0 0 8 5"><path d="M0 0H8L4 4.5Z" fill="#cbcbcb"/></svg>
<svg style="left:1204px;top:115px" width="5" height="18" viewBox="0 0 5 18"><g fill="#c2c2c2"><rect x="0" y="0" width="1.3" height="1.3"/><rect x="3" y="0" width="1.3" height="1.3"/><rect x="0" y="3" width="1.3" height="1.3"/><rect x="3" y="3" width="1.3" height="1.3"/><rect x="0" y="6" width="1.3" height="1.3"/><rect x="3" y="6" width="1.3" height="1.3"/><rect x="0" y="9" width="1.3" height="1.3"/><rect x="3" y="9" width="1.3" height="1.3"/><rect x="0" y="12" width="1.3" height="1.3"/><rect x="3" y="12" width="1.3" height="1.3"/><rect x="0" y="15" width="1.3" height="1.3"/><rect x="3" y="15" width="1.3" height="1.3"/></g></svg>
<svg style="left:1216px;top:111px" width="24" height="24" viewBox="0 0 24 24"><path d="M6 21l-2-6 11-12 5 4-11 12z" fill="#d4d4d4"/><path d="M12 4l5 4" stroke="#eee"/></svg>
<svg style="left:1235px;top:127px" width="8" height="5" viewBox="0 0 8 5"><path d="M0 0H8L4 4.5Z" fill="#cbcbcb"/></svg>
<svg style="left:1248px;top:111px" width="24" height="24" viewBox="0 0 24 24"><path d="M5 22l1-5 12-14 3 2.5-12 14z" fill="none" stroke="#d4d4d4" stroke-width="1.6"/></svg>
<svg style="left:1281px;top:111px" width="24" height="24" viewBox="0 0 24 24"><rect x="2" y="2" width="18" height="19" rx="2" fill="#d4d4d4"/><rect x="5" y="3" width="11" height="6" fill="#f1f1f1"/><rect x="5" y="13" width="12" height="7" fill="#efefef"/><path d="M15 21l6-8 2 2-6 8z" fill="#cfcfcf"/></svg>
<svg style="left:1315px;top:111px" width="24" height="24" viewBox="0 0 24 24"><path d="M3 21L21 3" stroke="#d4d4d4" stroke-width="1.2" stroke-dasharray="2 2"/><circle cx="3" cy="21" r="2" fill="#fff" stroke="#d4d4d4"/><circle cx="21" cy="3" r="2" fill="#fff" stroke="#d4d4d4"/></svg>
<svg style="left:1344.5px;top:121px" width="8" height="5" viewBox="0 0 8 5"><path d="M0 0H8L4 4.5Z" fill="#cbcbcb"/></svg>
<svg style="left:1357px;top:111px" width="24" height="24" viewBox="0 0 24 24"><path d="M3 9c0-5 6-6 10-5s7 2 6 6-4 3-6 5-6 1-8 0-2-3-2-6z" fill="#d4d4d4"/></svg>
<svg style="left:5px;top:155px" width="5" height="18" viewBox="0 0 5 18"><g fill="#c2c2c2"><rect x="0" y="0" width="1.3" height="1.3"/><rect x="3" y="0" width="1.3" height="1.3"/><rect x="0" y="3" width="1.3" height="1.3"/><rect x="3" y="3" width="1.3" height="1.3"/><rect x="0" y="6" width="1.3" height="1.3"/><rect x="3" y="6" width="1.3" height="1.3"/><rect x="0" y="9" width="1.3" height="1.3"/><rect x="3" y="9" width="1.3" height="1.3"/><rect x="0" y="12" width="1.3" height="1.3"/><rect x="3" y="12" width="1.3" height="1.3"/><rect x="0" y="15" width="1.3" height="1.3"/><rect x="3" y="15" width="1.3" height="1.3"/></g></svg>
<svg style="left:17px;top:151px" width="24" height="24" viewBox="0 0 24 24"><path d="M7 3l5 5 5-5 4 4-5 5 5 5-4 4-5-5-5 5-4-4 5-5-5-5z" fill="#f2f2f2" stroke="#d4d4d4" stroke-width="1.4"/></svg>
<svg style="left:232px;top:151px" width="24" height="24" viewBox="0 0 24 24"><path d="M2 12c3-5 7-7 10-7s7 2 10 7c-3 5-7 7-10 7s-7-2-10-7z" fill="#e8e8e8" stroke="#bdbdbd" stroke-width="1.1"/><circle cx="12" cy="12" r="4" fill="#bdbdbd"/><circle cx="12" cy="12" r="1.8" fill="#9a9a9a"/></svg>
<svg style="left:268px;top:151px" width="24" height="24" viewBox="0 0 24 24"><rect x="2" y="2" width="11" height="11" fill="none" stroke="#c5c5c5" stroke-dasharray="2 2"/><circle cx="15" cy="9" r="7" fill="#f6f6f6" stroke="#cfcfcf" stroke-width="1.5"/><path d="M10 14l-7 7" stroke="#cfcfcf" stroke-width="3" stroke-linecap="round"/></svg>
<svg style="left:341.5px;top:161.5px" width="8" height="5" viewBox="0 0 8 5"><path d="M0 0H8L4 4.5Z" fill="#333"/></svg>
<div class="a" style="left:360px;top:151px;width:1px;height:26px;background:#d6d6d6"></div>
<svg style="left:373px;top:151px" width="24" height="24" viewBox="0 0 24 24"><rect x="2" y="3" width="15" height="15" fill="#d7ebfa" stroke="#6aa4d4" stroke-width="1"/><rect x="13" y="13" width="9" height="9" rx="1.5" fill="#4a9a4a"/><path d="M17.5 15v5M15 17.5h5" stroke="#fff" stroke-width="1.8"/></svg>
<svg style="left:409px;top:151px" width="24" height="24" viewBox="0 0 24 24"><circle cx="8" cy="8" r="6.5" fill="#6b97cc" stroke="#3c5b86" stroke-width=".8"/><circle cx="19" cy="4" r="2.2" fill="#e5e5e5" stroke="#777" stroke-width=".8"/><circle cx="6" cy="19" r="4" fill="#2f4a70"/><path d="M12 17a4 4 0 0 1 8 0" fill="#2f4a70"/><rect x="13" y="13" width="9" height="9" rx="1.5" fill="#4a9a4a"/><path d="M17.5 15v5M15 17.5h5" stroke="#fff" stroke-width="1.8"/></svg>
<svg style="left:446px;top:151px" width="24" height="24" viewBox="0 0 24 24"><path d="M4 4l12-1-4 15-8-5z" fill="none" stroke="#222" stroke-width="1.2"/><g fill="#3b7fd0"><circle cx="4" cy="4" r="2.4"/><circle cx="16" cy="3" r="2.4"/><circle cx="4" cy="13" r="2.4"/><circle cx="11" cy="18" r="2.4"/></g><rect x="13" y="13" width="9" height="9" rx="1.5" fill="#4a9a4a"/><path d="M17.5 15v5M15 17.5h5" stroke="#fff" stroke-width="1.8"/></svg>
<div class="a" style="left:482px;top:151px;width:1px;height:26px;background:#d6d6d6"></div>
<svg style="left:503px;top:151px" width="24" height="24" viewBox="0 0 24 24"><path d="M5 4a4.5 4.5 0 0 0 5.5 6l8 8" stroke="#d4d4d4" stroke-width="3.5" fill="none" stroke-linecap="round"/></svg>
<svg style="left:526px;top:166px" width="8" height="5" viewBox="0 0 8 5"><path d="M0 0H8L4 4.5Z" fill="#cbcbcb"/></svg>
<svg style="left:546px;top:151px" width="24" height="24" viewBox="0 0 24 24"><g fill="none" stroke="#d4d4d4" stroke-width="1.3"><rect x="3" y="3" width="4" height="4"/><rect x="3" y="10" width="4" height="4"/><rect x="3" y="17" width="4" height="4"/></g><path d="M9 5h7M9 12h11M9 19h6" stroke="#d4d4d4" stroke-width="2"/></svg>
<svg style="left:583px;top:151px" width="24" height="24" viewBox="0 0 24 24"><rect x="2.5" y="2.5" width="19" height="19" fill="#fff" stroke="#8a8a8a" stroke-width="1"/><rect x="2.5" y="2.5" width="19" height="3" fill="#e7e7e7"/><path d="M6 6v12h4M6 10h4" stroke="#888" fill="none"/><rect x="10" y="8" width="4" height="4" fill="#3b75c0"/><rect x="10" y="15" width="4" height="4" fill="#3b75c0"/><path d="M15 10h4M15 17h4" stroke="#888"/></svg>
<svg style="left:621px;top:155px" width="5" height="18" viewBox="0 0 5 18"><g fill="#c2c2c2"><rect x="0" y="0" width="1.3" height="1.3"/><rect x="3" y="0" width="1.3" height="1.3"/><rect x="0" y="3" width="1.3" height="1.3"/><rect x="3" y="3" width="1.3" height="1.3"/><rect x="0" y="6" width="1.3" height="1.3"/><rect x="3" y="6" width="1.3" height="1.3"/><rect x="0" y="9" width="1.3" height="1.3"/><rect x="3" y="9" width="1.3" height="1.3"/><rect x="0" y="12" width="1.3" height="1.3"/><rect x="3" y="12" width="1.3" height="1.3"/><rect x="0" y="15" width="1.3" height="1.3"/><rect x="3" y="15" width="1.3" height="1.3"/></g></svg>
<svg style="left:632px;top:151px" width="24" height="24" viewBox="0 0 24 24"><path d="M2 4h20" stroke="#222" stroke-width="1.3"/><path d="M18 4c-2 8-6 13-14 17" stroke="#222" stroke-width="1.3" fill="none"/></svg>
<svg style="left:664px;top:151px" width="24" height="24" viewBox="0 0 24 24"><path d="M2 4h7" stroke="#666" stroke-width="1.6"/><path d="M9 4h6" stroke="#6a5ac8" stroke-width="1.6"/><path d="M15 4h7" stroke="#e06060" stroke-width="1.6"/><path d="M2 12h7" stroke="#50b050" stroke-width="1.6"/><path d="M9 12h6" stroke="#40c8e8" stroke-width="1.6"/><path d="M15 12h7" stroke="#c040c0" stroke-width="1.6"/><path d="M2 19h7" stroke="#e89ad0" stroke-width="1.6"/><path d="M9 19h6" stroke="#f0e080" stroke-width="1.6"/><path d="M15 19h7" stroke="#e8b080" stroke-width="1.6"/></svg>
<svg style="left:698px;top:151px" width="24" height="24" viewBox="0 0 24 24"><path d="M2 4h20" stroke="#222" stroke-width="1.4"/><path d="M19 4L6 21" stroke="#d02020" stroke-width="1.5"/><g fill="#d02020"><circle cx="15" cy="9" r="1.7"/><circle cx="10" cy="16" r="1.7"/><circle cx="6" cy="21" r="1.7"/></g></svg>
<svg style="left:732px;top:151px" width="24" height="24" viewBox="0 0 24 24"><path d="M3 4h19M8 4L4 20M14 4l-4 16M20 4l-4 16" stroke="#222" stroke-width="1.5"/></svg>
<div class="a" style="left:765px;top:151px;width:1px;height:26px;background:#d6d6d6"></div>
<svg style="left:772px;top:151px" width="24" height="24" viewBox="0 0 24 24"><path d="M2 12V7.5h12.5V2.5l8 6.5-8 6.5v-4.5H5.5V12z" fill="#f08c1e"/><path d="M22 12.5V17H9.5v4.5l-8-6.5 8-6.5V13h9v-0.5z" fill="#3cb03a"/></svg>
<svg style="left:806px;top:151px" width="24" height="24" viewBox="0 0 24 24"><rect x="2" y="2" width="20" height="20" fill="#fff" stroke="#333" stroke-width="1"/><g fill="#111"><rect x="12" y="2" width="5" height="5"/><rect x="17" y="7" width="5" height="5"/><rect x="12" y="12" width="5" height="5"/><rect x="17" y="17" width="5" height="5"/></g><path d="M6 9l5 3-5 3" stroke="#e02020" stroke-width="2" fill="none"/></svg>
<svg style="left:838px;top:151px" width="24" height="24" viewBox="0 0 24 24"><rect x="2" y="2" width="10" height="20" fill="#111"/><rect x="12" y="2" width="10" height="20" fill="#fff" stroke="#333" stroke-width=".8"/><g fill="#111"><rect x="12" y="2" width="5" height="5"/><rect x="17" y="7" width="5" height="5"/><rect x="12" y="12" width="5" height="5"/><rect x="17" y="17" width="5" height="5"/></g><path d="M7 9l5 3-5 3" stroke="#e02020" stroke-width="2" fill="none"/></svg>
<svg style="left:875px;top:155px" width="5" height="18" viewBox="0 0 5 18"><g fill="#c2c2c2"><rect x="0" y="0" width="1.3" height="1.3"/><rect x="3" y="0" width="1.3" height="1.3"/><rect x="0" y="3" width="1.3" height="1.3"/><rect x="3" y="3" width="1.3" height="1.3"/><rect x="0" y="6" width="1.3" height="1.3"/><rect x="3" y="6" width="1.3" height="1.3"/><rect x="0" y="9" width="1.3" height="1.3"/><rect x="3" y="9" width="1.3" height="1.3"/><rect x="0" y="12" width="1.3" height="1.3"/><rect x="3" y="12" width="1.3" height="1.3"/><rect x="0" y="15" width="1.3" height="1.3"/><rect x="3" y="15" width="1.3" height="1.3"/></g></svg>
<svg style="left:886px;top:149px" width="26" height="28" viewBox="0 0 26 28"><circle cx="13" cy="5" r="3.6" fill="none" stroke="#7db043" stroke-width="2.2"/><path d="M15 7l2 2" stroke="#7db043" stroke-width="2"/><text x="0.5" y="26" font-family="Liberation Sans" font-weight="bold" font-size="14" fill="#7db043">hub</text></svg>
<svg style="left:925px;top:155px" width="5" height="18" viewBox="0 0 5 18"><g fill="#c2c2c2"><rect x="0" y="0" width="1.3" height="1.3"/><rect x="3" y="0" width="1.3" height="1.3"/><rect x="0" y="3" width="1.3" height="1.3"/><rect x="3" y="3" width="1.3" height="1.3"/><rect x="0" y="6" width="1.3" height="1.3"/><rect x="3" y="6" width="1.3" height="1.3"/><rect x="0" y="9" width="1.3" height="1.3"/><rect x="3" y="9" width="1.3" height="1.3"/><rect x="0" y="12" width="1.3" height="1.3"/><rect x="3" y="12" width="1.3" height="1.3"/><rect x="0" y="15" width="1.3" height="1.3"/><rect x="3" y="15" width="1.3" height="1.3"/></g></svg>
<svg style="left:936px;top:151px" width="24" height="24" viewBox="0 0 24 24"><rect x="1" y="1" width="22" height="22" fill="#5cae48"/><circle cx="13.5" cy="10" r="6" fill="#8fd07a" stroke="#fff" stroke-width="1.8"/><path d="M9 14.5L3.5 20" stroke="#fff" stroke-width="2.4"/></svg>
<svg style="left:968px;top:151px" width="24" height="24" viewBox="0 0 24 24"><rect x="1" y="2" width="21" height="20" fill="#e8c64a"/><path d="M1 9l7-3 6 5 8-4M4 22l4-10 8 3 6-6M1 15l6 2" stroke="#4d86c6" stroke-width="2" fill="none"/><rect x="12" y="12" width="5" height="5" fill="#e04040"/><path d="M11 16l11-14" stroke="#8b5a2b" stroke-width="3"/></svg>
<svg style="left:1006px;top:155px" width="5" height="18" viewBox="0 0 5 18"><g fill="#c2c2c2"><rect x="0" y="0" width="1.3" height="1.3"/><rect x="3" y="0" width="1.3" height="1.3"/><rect x="0" y="3" width="1.3" height="1.3"/><rect x="3" y="3" width="1.3" height="1.3"/><rect x="0" y="6" width="1.3" height="1.3"/><rect x="3" y="6" width="1.3" height="1.3"/><rect x="0" y="9" width="1.3" height="1.3"/><rect x="3" y="9" width="1.3" height="1.3"/><rect x="0" y="12" width="1.3" height="1.3"/><rect x="3" y="12" width="1.3" height="1.3"/><rect x="0" y="15" width="1.3" height="1.3"/><rect x="3" y="15" width="1.3" height="1.3"/></g></svg>
<svg style="left:1018px;top:151px" width="24" height="24" viewBox="0 0 24 24"><rect x="1" y="2" width="21" height="13" rx="3.5" fill="#4b7fc0"/><text x="11.5" y="11.8" text-anchor="middle" font-family="Liberation Sans" font-weight="bold" font-size="8" fill="#fff">KML</text><rect x="13" y="14" width="9" height="9" rx="1.5" fill="#5a8a5a"/><path d="M17.5 16v5M15 18.5h5" stroke="#fff" stroke-width="1.8"/></svg>
<svg style="left:1050px;top:151px" width="24" height="24" viewBox="0 0 24 24"><rect x="1" y="2" width="21" height="13" rx="3.5" fill="#4b7fc0"/><text x="11.5" y="11.8" text-anchor="middle" font-family="Liberation Sans" font-weight="bold" font-size="8" fill="#fff">KMZ</text><rect x="13" y="14" width="9" height="9" rx="1" fill="#3d5d7d"/><path d="M15 16h5v5h-5M17 18.5h4" stroke="#fff" stroke-width="1" fill="none"/></svg>
<svg style="left:1083px;top:151px" width="24" height="24" viewBox="0 0 24 24"><rect x="1" y="2" width="21" height="13" rx="3.5" fill="#4b7fc0"/><text x="11.5" y="11.8" text-anchor="middle" font-family="Liberation Sans" font-weight="bold" font-size="6.2" fill="#fff">HTML</text><rect x="13" y="14" width="9" height="9" rx="1" fill="#dcae22"/><path d="M17.5 15.6v5.8M15 17l5 2.9M15 19.9l5-2.9" stroke="#fff" stroke-width="1.2"/></svg>
<svg style="left:1117px;top:151px" width="24" height="24" viewBox="0 0 24 24"><rect x="1" y="1" width="10" height="10" fill="#3cc060"/><rect x="13" y="1" width="10" height="10" fill="#e8d040"/><rect x="1" y="13" width="10" height="10" fill="#3a7fd0"/><rect x="13" y="13" width="10" height="10" fill="#1a6030"/><rect x="7" y="7" width="10" height="10" fill="#8b5a2b" stroke="#555" stroke-width=".5"/></svg>
<svg style="left:1150px;top:151px" width="24" height="24" viewBox="0 0 24 24"><rect x="2" y="2" width="20" height="20" fill="#aee0b0" stroke="#222" stroke-width="1.4" transform="rotate(-4 12 12)"/><path d="M3 9h18M3 15h18M8 3l8 18" stroke="#eaf5ea" stroke-width="1.6"/><path d="M5 6h6M13 12h6M5 18h5" stroke="#3a9a5a" stroke-width="1" stroke-dasharray="1.5 1"/></svg>
<svg style="left:1187px;top:155px" width="5" height="18" viewBox="0 0 5 18"><g fill="#c2c2c2"><rect x="0" y="0" width="1.3" height="1.3"/><rect x="3" y="0" width="1.3" height="1.3"/><rect x="0" y="3" width="1.3" height="1.3"/><rect x="3" y="3" width="1.3" height="1.3"/><rect x="0" y="6" width="1.3" height="1.3"/><rect x="3" y="6" width="1.3" height="1.3"/><rect x="0" y="9" width="1.3" height="1.3"/><rect x="3" y="9" width="1.3" height="1.3"/><rect x="0" y="12" width="1.3" height="1.3"/><rect x="3" y="12" width="1.3" height="1.3"/><rect x="0" y="15" width="1.3" height="1.3"/><rect x="3" y="15" width="1.3" height="1.3"/></g></svg>
<svg style="left:13px;top:187px" width="16" height="5" viewBox="0 0 16 5"><g fill="#c2c2c2"><rect x="0" y="0" width="1.3" height="1.3"/><rect x="0" y="3" width="1.3" height="1.3"/><rect x="3" y="0" width="1.3" height="1.3"/><rect x="3" y="3" width="1.3" height="1.3"/><rect x="6" y="0" width="1.3" height="1.3"/><rect x="6" y="3" width="1.3" height="1.3"/><rect x="9" y="0" width="1.3" height="1.3"/><rect x="9" y="3" width="1.3" height="1.3"/><rect x="12" y="0" width="1.3" height="1.3"/><rect x="12" y="3" width="1.3" height="1.3"/></g></svg>
<svg style="left:7px;top:198px" width="24" height="24" viewBox="0 0 24 24"><path d="M2 9l9-5 6 12-9 4z" fill="#e0762e"/><path d="M5 6l9-4 5 11-9 4z" fill="#f0b030"/><rect x="8" y="2" width="12" height="12" fill="#5a8ac0" transform="rotate(-10 14 8)"/><rect x="14" y="14" width="9" height="9" rx="1.5" fill="#4a9a4a"/><path d="M18.5 16v5M16 18.5h5" stroke="#fff" stroke-width="1.8"/></svg>
<svg style="left:7px;top:232px" width="24" height="24" viewBox="0 0 24 24"><path d="M2 10l10-5 10 5v9l-10 4-10-4z" fill="#e9c43c"/><path d="M2 10l10 4 10-4" stroke="#b08a20" fill="none"/><path d="M12 14v9" stroke="#b08a20"/><circle cx="12" cy="8" r="6" fill="#4f7fbf"/><path d="M8 6c2 1 3 0 4 2s3 1 4 0" stroke="#2a4a7a" fill="none"/><rect x="14" y="14" width="9" height="9" rx="1" fill="#dcae22"/><path d="M18.5 15.6v5.8M16 17l5 2.9M16 19.9l5-2.9" stroke="#fff" stroke-width="1.2"/></svg>
<svg style="left:7px;top:263px" width="24" height="24" viewBox="0 0 24 24"><path d="M3 4l6 16 5-12 7-4" stroke="#333" stroke-width="1.2" fill="none"/><g fill="#fff" stroke="#333"><circle cx="3" cy="4" r="2"/><circle cx="14" cy="8" r="2"/><circle cx="21" cy="4" r="2"/></g><rect x="14" y="14" width="9" height="9" rx="1" fill="#dcae22"/><path d="M18.5 15.6v5.8M16 17l5 2.9M16 19.9l5-2.9" stroke="#fff" stroke-width="1.2"/></svg>
<svg style="left:7px;top:296px" width="24" height="24" viewBox="0 0 24 24"><path d="M2 22C4 12 10 4 21 2c-1 8-6 14-14 16l-5 4z" fill="#5a8ac0"/><path d="M3 21L17 6" stroke="#fff" stroke-width="1"/><rect x="14" y="14" width="9" height="9" rx="1" fill="#dcae22"/><path d="M18.5 15.6v5.8M16 17l5 2.9M16 19.9l5-2.9" stroke="#fff" stroke-width="1.2"/></svg>
<svg style="left:7px;top:328px" width="24" height="24" viewBox="0 0 24 24"><rect x="2" y="6" width="18" height="11" rx="2" fill="#5a8ac0" stroke="#335c8a"/><path d="M5 3v3M8 3v3M11 3v3M14 3v3M17 3v3M5 17v3M8 17v3M11 17v3M14 17v3" stroke="#335c8a" stroke-width="1.2"/><rect x="14" y="14" width="9" height="9" rx="1" fill="#dcae22"/><path d="M18.5 15.6v5.8M16 17l5 2.9M16 19.9l5-2.9" stroke="#fff" stroke-width="1.2"/></svg>
<svg style="left:7px;top:360px" width="24" height="24" viewBox="0 0 24 24"><rect x="2" y="2" width="19" height="19" fill="#5a8ac0" stroke="#2f4f78"/><path d="M2 12h19M11 2v19M2 2l9 10M11 2L2 12" stroke="#d8e4f0" stroke-width="1"/><rect x="14" y="14" width="9" height="9" rx="1" fill="#dcae22"/><path d="M18.5 15.6v5.8M16 17l5 2.9M16 19.9l5-2.9" stroke="#fff" stroke-width="1.2"/></svg>
<svg style="left:7px;top:392px" width="24" height="24" viewBox="0 0 24 24"><rect x="2" y="2" width="19" height="20" rx="2" fill="#a9c3e0" stroke="#4a6f9a"/><path d="M5 5l6 13 6-13" stroke="#222" stroke-width="1.2" fill="none"/><rect x="14" y="14" width="9" height="9" rx="1" fill="#dcae22"/><path d="M18.5 15.6v5.8M16 17l5 2.9M16 19.9l5-2.9" stroke="#fff" stroke-width="1.2"/></svg>
<svg style="left:13px;top:428px" width="16" height="5" viewBox="0 0 16 5"><g fill="#c2c2c2"><rect x="0" y="0" width="1.3" height="1.3"/><rect x="0" y="3" width="1.3" height="1.3"/><rect x="3" y="0" width="1.3" height="1.3"/><rect x="3" y="3" width="1.3" height="1.3"/><rect x="6" y="0" width="1.3" height="1.3"/><rect x="6" y="3" width="1.3" height="1.3"/><rect x="9" y="0" width="1.3" height="1.3"/><rect x="9" y="3" width="1.3" height="1.3"/><rect x="12" y="0" width="1.3" height="1.3"/><rect x="12" y="3" width="1.3" height="1.3"/></g></svg>
<svg style="left:7px;top:440px" width="24" height="24" viewBox="0 0 24 24"><rect x="4" y="2" width="16" height="20" fill="#5a8ac0"/><rect x="4" y="2" width="4" height="20" fill="#223a5a"/><text x="10" y="17" font-family="Liberation Sans" font-size="13" fill="#fff">?</text></svg>
<svg style="left:46px;top:215px" width="20" height="20" viewBox="0 0 24 24"><path d="M3 13l5-5 6 6-5 5z" fill="#e84a3a"/><path d="M4.5 14.5l2-2 6 6-2 2z" fill="#f0c030"/><path d="M3 13l2-2 6 6-2 2z" fill="#4a8ad0" opacity=".8"/><path d="M10 10l8-8 1.5 1.5-8 8z" fill="#e8a040"/></svg>
<svg style="left:71px;top:215px" width="20" height="20" viewBox="0 0 24 24"><rect x="2" y="7" width="11" height="12" fill="#fff" stroke="#777"/><rect x="6" y="3" width="11" height="12" fill="#fff" stroke="#777"/><path d="M9 5v8M12 5v8" stroke="#777"/><circle cx="16" cy="17" r="3.5" fill="#4aa84a"/><path d="M16 15v4M14 17h4" stroke="#fff"/></svg>
<svg style="left:96px;top:215px" width="20" height="20" viewBox="0 0 24 24"><path d="M1 9c3-4 6-5 9-5s6 1 9 5c-3 4-6 5-9 5s-6-1-9-5z" fill="#e9edf3" stroke="#9aa4b4" stroke-width=".9"/><circle cx="10" cy="9" r="3.6" fill="#5a7fb8"/><circle cx="10" cy="9" r="1.5" fill="#2a3a5a"/><path d="M14 15h5l-2.5 3z" fill="#333"/></svg>
<svg style="left:122px;top:215px" width="20" height="20" viewBox="0 0 24 24"><path d="M2 3h16l-6 7v7.5l-4 1.5v-9z" fill="#5b8ac0"/><path d="M2 3h16l-1.6 2.2H3.6z" fill="#e8d040"/><path d="M14 16h5l-2.5 3z" fill="#333"/></svg>
<svg style="left:148px;top:215px" width="20" height="20" viewBox="0 0 24 24"><text x="1" y="14" font-family="Liberation Serif" font-size="16" fill="#c4c4c4">&#949;</text><rect x="9" y="9" width="9" height="9" fill="#e0e0e0"/></svg>
<svg style="left:170px;top:223px" width="8" height="5" viewBox="0 0 8 5"><path d="M0 0H8L4 4.5Z" fill="#cbcbcb"/></svg>
<svg style="left:184px;top:215px" width="20" height="20" viewBox="0 0 24 24"><path d="M3 2v16M3 6h4M3 13h4" stroke="#777" fill="none" stroke-width=".9"/><rect x="5" y="4.5" width="3.5" height="3.5" fill="#e8a030"/><rect x="5" y="11.5" width="3.5" height="3.5" fill="#e8a030"/><path d="M11 2h4.5v8H19l-5.8 8-5.7-8H11z" fill="#4a7cc0" stroke="#2a4a80" stroke-width=".6"/></svg>
<svg style="left:208px;top:215px" width="20" height="20" viewBox="0 0 24 24"><path d="M3 3v16M3 7h4M3 14h4" stroke="#777" fill="none" stroke-width=".9"/><rect x="5" y="5.5" width="3.5" height="3.5" fill="#e8a030"/><rect x="5" y="12.5" width="3.5" height="3.5" fill="#e8a030"/><path d="M11 18h4.5v-8H19l-5.8-8-5.7 8H11z" fill="#4a7cc0" stroke="#2a4a80" stroke-width=".6"/></svg>
<svg style="left:232px;top:215px" width="20" height="20" viewBox="0 0 24 24"><rect x="2" y="2" width="13" height="13" fill="#fff" stroke="#555" stroke-width="1.1"/><rect x="11" y="13" width="8" height="5" rx="1.5" fill="#e02020"/><path d="M13 15.5h4" stroke="#fff"/></svg>
<svg style="left:424px;top:191px" width="11" height="11" viewBox="0 0 11 11"><rect x=".6" y=".6" width="9.8" height="9.8" rx="2.2" fill="none" stroke="#666" stroke-width="1.1"/><rect x="2.8" y="4.6" width="3.8" height="3.6" fill="none" stroke="#666" stroke-width="1"/><rect x="4.6" y="2.8" width="3.6" height="3.6" fill="none" stroke="#666" stroke-width="1"/></svg>
<svg style="left:438px;top:191px" width="11" height="11" viewBox="0 0 11 11"><rect x=".6" y=".6" width="9.8" height="9.8" rx="2.2" fill="none" stroke="#666" stroke-width="1.1"/><path d="M3 3l5 5M8 3L3 8" stroke="#555" stroke-width="1.9"/></svg>
<svg style="left:46px;top:249px" width="9" height="6" viewBox="0 0 9 6"><path d="M0 0H9L4.5 5Z" fill="#fff"/></svg>
<svg style="left:64px;top:246px" width="13" height="13" viewBox="0 0 13 13"><rect x=".5" y=".5" width="12" height="12" fill="#fff" stroke="#999"/><path d="M2.5 6.5L5.5 10L10.5 2" stroke="#000" stroke-width="1.8" fill="none"/></svg>
<svg style="left:86px;top:245px" width="9" height="15" viewBox="0 0 9 15"><path d="M1 4h6v10H1z" fill="none" stroke="#ddd"/></svg>
<svg style="left:67px;top:275px" width="5" height="8" viewBox="0 0 5 8"><path d="M0 0L5 4L0 8Z" fill="#333"/></svg>
<svg style="left:84px;top:272px" width="11" height="13" viewBox="0 0 11 13"><rect x=".5" y=".5" width="12" height="12" fill="#fff" stroke="#999"/><path d="M2.5 6.5L5.5 10L10.5 2" stroke="#000" stroke-width="1.8" fill="none"/></svg>
<svg style="left:67px;top:299px" width="5" height="8" viewBox="0 0 5 8"><path d="M0 0L5 4L0 8Z" fill="#333"/></svg>
<svg style="left:84px;top:296px" width="11" height="13" viewBox="0 0 11 13"><rect x=".5" y=".5" width="12" height="12" fill="#fff" stroke="#999"/><path d="M2.5 6.5L5.5 10L10.5 2" stroke="#000" stroke-width="1.8" fill="none"/></svg>
<svg style="left:47px;top:324px" width="5" height="8" viewBox="0 0 5 8"><path d="M0 0L5 4L0 8Z" fill="#333"/></svg>
<svg style="left:64px;top:321px" width="13" height="13" viewBox="0 0 13 13"><rect x=".5" y=".5" width="12" height="12" fill="#fff" stroke="#999"/></svg>
<svg style="left:85px;top:320px" width="10" height="16" viewBox="0 0 10 16"><rect x="1" y="5" width="8" height="10" fill="#fff" stroke="#888"/><rect x="4" y="2" width="6" height="9" fill="#fff" stroke="#888"/></svg>
<svg style="left:102px;top:242px" width="18" height="18" viewBox="0 0 18 18"><path d="M1 8c2-3 5-4.5 8-4.5s6 1.5 8 4.5c-2 3-5 4.5-8 4.5S3 11 1 8z" fill="#e6eaf0" stroke="#9ba6b8" stroke-width=".9"/><circle cx="9" cy="8" r="3.3" fill="#6a8fc4"/><circle cx="9" cy="8" r="1.4" fill="#2a3c60"/></svg>
<svg style="left:102px;top:273px" width="18" height="18" viewBox="0 0 18 18"><path d="M1 8c2-3 5-4 8-4s6 1 8 4c-2 2-5 3-8 3s-6-1-8-3z" fill="#efefef" stroke="#b0b0b0" stroke-width=".9"/><path d="M1.5 8c3 3 12 3 15 0" stroke="#c8c8c8" fill="none"/></svg>
<svg style="left:102px;top:304px" width="18" height="18" viewBox="0 0 18 18"><path d="M1 8c2-3 5-4.5 8-4.5s6 1.5 8 4.5c-2 3-5 4.5-8 4.5S3 11 1 8z" fill="#e6eaf0" stroke="#9ba6b8" stroke-width=".9"/><circle cx="9" cy="8" r="3.3" fill="#6a8fc4"/><circle cx="9" cy="8" r="1.4" fill="#2a3c60"/><path d="M9 11h8v6H9z" fill="#f0d850" stroke="#c8b030" stroke-width=".8"/></svg>
<svg style="left:102px;top:335px" width="18" height="18" viewBox="0 0 18 18"><path d="M1 8c2-3 5-4 8-4s6 1 8 4c-2 2-5 3-8 3s-6-1-8-3z" fill="#efefef" stroke="#b0b0b0" stroke-width=".9"/><path d="M1.5 8c3 3 12 3 15 0" stroke="#c8c8c8" fill="none"/><path d="M9 11h8v6H9z" fill="#f0d850" stroke="#c8b030" stroke-width=".8"/></svg>
<svg style="left:102px;top:366px" width="18" height="18" viewBox="0 0 18 18"><path d="M1 8c2-3 5-4.5 8-4.5s6 1.5 8 4.5c-2 3-5 4.5-8 4.5S3 11 1 8z" fill="#e6eaf0" stroke="#9ba6b8" stroke-width=".9"/><circle cx="9" cy="8" r="3.3" fill="#6a8fc4"/><circle cx="9" cy="8" r="1.4" fill="#2a3c60"/><path d="M6 2v14" stroke="#3a9a3a" stroke-width="1.2"/><path d="M9 11h8v6H9z" fill="#f0d850" stroke="#c8b030" stroke-width=".8"/></svg>
<svg style="left:102px;top:428px" width="18" height="18" viewBox="0 0 18 18"><path d="M1 8c2-3 5-4 8-4s6 1 8 4c-2 2-5 3-8 3s-6-1-8-3z" fill="#efefef" stroke="#b0b0b0" stroke-width=".9"/><path d="M5 11h11v6H5z" fill="#efefef" stroke="#b5b5b5" stroke-width=".8"/></svg>
<svg style="left:5px;top:1015px" width="5" height="18" viewBox="0 0 5 18"><g fill="#c2c2c2"><rect x="0" y="0" width="1.3" height="1.3"/><rect x="3" y="0" width="1.3" height="1.3"/><rect x="0" y="3" width="1.3" height="1.3"/><rect x="3" y="3" width="1.3" height="1.3"/><rect x="0" y="6" width="1.3" height="1.3"/><rect x="3" y="6" width="1.3" height="1.3"/><rect x="0" y="9" width="1.3" height="1.3"/><rect x="3" y="9" width="1.3" height="1.3"/><rect x="0" y="12" width="1.3" height="1.3"/><rect x="3" y="12" width="1.3" height="1.3"/><rect x="0" y="15" width="1.3" height="1.3"/><rect x="3" y="15" width="1.3" height="1.3"/></g></svg>
<svg style="left:16px;top:1011px" width="24" height="24" viewBox="0 0 24 24"><path d="M12 2L22 20H2z" fill="#7cb33a"/><path d="M12 8L17 17H7z" fill="#fff"/><path d="M2 22h20" stroke="#e88a30" stroke-width="2"/></svg>
<svg style="left:50px;top:1011px" width="24" height="24" viewBox="0 0 24 24"><rect x="1" y="1" width="18" height="19" rx="2" fill="#3a5a2a"/><text x="3" y="16" font-family="Liberation Serif" font-weight="bold" font-size="15" fill="#fff">F</text><rect x="12" y="13" width="10" height="10" rx="2" fill="#4a6a9a"/><path d="M14 18h6M18 16l2 2-2 2" stroke="#fff" stroke-width="1.2" fill="none"/></svg>
<svg style="left:83px;top:1011px" width="24" height="24" viewBox="0 0 24 24"><circle cx="12" cy="11" r="10" fill="#8aaed8" stroke="#4a6a9a"/><path d="M2 11h20M12 1v20M5 4c4 3 10 3 14 0M5 18c4-3 10-3 14 0" stroke="#5a7aa0" fill="none" stroke-width=".8"/><circle cx="7" cy="19" r="3.5" fill="#111"/><circle cx="17" cy="19" r="3.5" fill="#111"/><path d="M8 17h8" stroke="#111" stroke-width="2"/><circle cx="7" cy="19.5" r="1.5" fill="#fff"/><circle cx="17" cy="19.5" r="1.5" fill="#fff"/></svg>
<svg style="left:120px;top:1015px" width="5" height="18" viewBox="0 0 5 18"><g fill="#c2c2c2"><rect x="0" y="0" width="1.3" height="1.3"/><rect x="3" y="0" width="1.3" height="1.3"/><rect x="0" y="3" width="1.3" height="1.3"/><rect x="3" y="3" width="1.3" height="1.3"/><rect x="0" y="6" width="1.3" height="1.3"/><rect x="3" y="6" width="1.3" height="1.3"/><rect x="0" y="9" width="1.3" height="1.3"/><rect x="3" y="9" width="1.3" height="1.3"/><rect x="0" y="12" width="1.3" height="1.3"/><rect x="3" y="12" width="1.3" height="1.3"/><rect x="0" y="15" width="1.3" height="1.3"/><rect x="3" y="15" width="1.3" height="1.3"/></g></svg>
<svg style="left:132px;top:1011px" width="24" height="24" viewBox="0 0 24 24"><path d="M12 2c-5 0-5 2-5 4v2h5v1H5c-3 0-4 2-4 5s1 5 4 5h2v-3c0-2 2-4 4-4h5c2 0 3-1 3-3V6c0-2-2-4-7-4z" fill="#3b77b8"/><path d="M12 22c5 0 5-2 5-4v-2h-5v-1h7c3 0 4-2 4-5s-1-5-4-5h-2v3c0 2-2 4-4 4H8c-2 0-3 1-3 3v3c0 2 2 4 7 4z" fill="#f7d23a"/><path d="M16 18l3 2-3 2" stroke="#555" fill="none"/></svg>
<svg style="left:165px;top:1011px" width="24" height="24" viewBox="0 0 24 24"><g><rect x="1" y="1" width="7" height="7" fill="#7aa0c0"/><rect x="8" y="1" width="7" height="7" fill="#6a7a90"/><rect x="15" y="1" width="7" height="7" fill="#5a4a5a"/><rect x="1" y="8" width="7" height="7" fill="#a0c0d8"/><rect x="8" y="8" width="7" height="7" fill="#8a7a8a"/><rect x="15" y="8" width="7" height="7" fill="#8a4a50"/><rect x="1" y="15" width="7" height="7" fill="#e8e0e8"/><rect x="8" y="15" width="7" height="7" fill="#d0a0b0"/><rect x="15" y="15" width="7" height="7" fill="#d04050"/></g><path d="M1 8h21M1 15h21M8 1v21M15 1v21" stroke="#222" stroke-width=".6"/></svg>
<svg style="left:198px;top:1011px" width="24" height="24" viewBox="0 0 24 24"><path d="M3 2v20h19" stroke="#777" stroke-width="1.2" fill="none"/><path d="M4 18c5 0 7-4 9-8s4-6 8-6" stroke="#b040b0" stroke-width="1.5" fill="none"/><path d="M4 19c5-1 8-3 10-6s4-2 7-2" stroke="#40a0d0" stroke-width="1.2" fill="none"/></svg>
<svg style="left:227.5px;top:1021px" width="8" height="5" viewBox="0 0 8 5"><path d="M0 0H8L4 4.5Z" fill="#444"/></svg>
<svg style="left:242px;top:1011px" width="24" height="24" viewBox="0 0 24 24"><circle cx="9" cy="9" r="8" fill="#1a8a2a"/><text x="6.5" y="14" font-family="Liberation Serif" font-style="italic" font-weight="bold" font-size="12" fill="#fff">i</text><path d="M12 12l9 7-4 .5 2 3.5-1.5.8-2-3.5-2.5 2.5z" fill="#fff" stroke="#333" stroke-width=".9"/></svg>
<svg style="left:275px;top:1011px" width="24" height="24" viewBox="0 0 24 24"><path d="M3 2v20h19" stroke="#111" stroke-width="1.6" fill="none"/><path d="M4 21L20 4" stroke="#2040c0" stroke-width="2"/><path d="M20 3l-1 5-4-4z" fill="#2040c0"/><path d="M5 8l8 8" stroke="#e8e040" stroke-width="4" opacity=".6"/><path d="M3 3h18M21 3v17" stroke="#333" stroke-dasharray="1 2"/></svg>
<svg style="left:309px;top:1011px" width="24" height="24" viewBox="0 0 24 24"><path d="M1 21c3-6 6-10 9-10s5 4 8 4 4 2 5 6z" fill="#22c022" stroke="#111"/><circle cx="19" cy="5" r="3" fill="#f8e040"/><path d="M19 0v2M23 5h-2M16 2l1 1M22 2l-1 1" stroke="#f8d030"/></svg>
<svg style="left:342px;top:1011px" width="24" height="24" viewBox="0 0 24 24"><circle cx="12" cy="12" r="11" fill="#1a2240"/><circle cx="12" cy="12" r="9" fill="#2a5aa0"/><path d="M6 8c3 0 4 3 7 3s2 5 5 6" stroke="#4a9a4a" stroke-width="3" fill="none"/></svg>
<svg style="left:375px;top:1011px" width="24" height="24" viewBox="0 0 24 24"><rect x="0" y="0" width="24" height="24" fill="#7a7a7a"/><path d="M2 18c4-2 6-6 9-12 2 5 5 8 11 9-6 2-10 5-12 6-3-2-6-3-8-3z" fill="#e8c040"/><path d="M3 18c4 0 7-1 9-3" stroke="#3a6a2a" stroke-width="2"/></svg>
<svg style="left:408px;top:1011px" width="24" height="24" viewBox="0 0 24 24"><path d="M2 14l10-6 10 6-10 6z" fill="#3a6a8a"/><path d="M2 12l10-6 10 6-10 6z" fill="#8ac0d8"/><path d="M8 12c0-5 3-8 8-9-1 5-2 9-8 9z" fill="#8ad040"/><path d="M11 14c1-4 4-6 8-6-1 4-3 6-8 6z" fill="#6ab030"/></svg>
<svg style="left:445px;top:1015px" width="5" height="18" viewBox="0 0 5 18"><g fill="#c2c2c2"><rect x="0" y="0" width="1.3" height="1.3"/><rect x="3" y="0" width="1.3" height="1.3"/><rect x="0" y="3" width="1.3" height="1.3"/><rect x="3" y="3" width="1.3" height="1.3"/><rect x="0" y="6" width="1.3" height="1.3"/><rect x="3" y="6" width="1.3" height="1.3"/><rect x="0" y="9" width="1.3" height="1.3"/><rect x="3" y="9" width="1.3" height="1.3"/><rect x="0" y="12" width="1.3" height="1.3"/><rect x="3" y="12" width="1.3" height="1.3"/><rect x="0" y="15" width="1.3" height="1.3"/><rect x="3" y="15" width="1.3" height="1.3"/></g></svg>
<svg style="left:458px;top:1011px" width="24" height="24" viewBox="0 0 24 24"><rect x="2" y="1" width="15" height="15" fill="none" stroke="#b0d8e8" stroke-width="1.2"/><rect x="5" y="4" width="15" height="15" fill="#fff" stroke="#3aa0b0" stroke-width="1.2"/><rect x="8" y="7" width="15" height="15" fill="#fff" stroke="#226070" stroke-width="1.3"/><circle cx="15.5" cy="14.5" r="4" fill="none" stroke="#3aa0b0" stroke-width="1.3"/></svg>
<svg style="left:494px;top:1015px" width="5" height="18" viewBox="0 0 5 18"><g fill="#c2c2c2"><rect x="0" y="0" width="1.3" height="1.3"/><rect x="3" y="0" width="1.3" height="1.3"/><rect x="0" y="3" width="1.3" height="1.3"/><rect x="3" y="3" width="1.3" height="1.3"/><rect x="0" y="6" width="1.3" height="1.3"/><rect x="3" y="6" width="1.3" height="1.3"/><rect x="0" y="9" width="1.3" height="1.3"/><rect x="3" y="9" width="1.3" height="1.3"/><rect x="0" y="12" width="1.3" height="1.3"/><rect x="3" y="12" width="1.3" height="1.3"/><rect x="0" y="15" width="1.3" height="1.3"/><rect x="3" y="15" width="1.3" height="1.3"/></g></svg>
<svg style="left:506px;top:1011px" width="24" height="24" viewBox="0 0 24 24"><rect x="1" y="3" width="22" height="15" fill="#f2f8f2" stroke="#555" stroke-width="1"/><path d="M1 7h22M1 11h22M1 15h22M6 3v15M11 3v15M16 3v15" stroke="#9ac09a" stroke-width=".6"/><rect x="12" y="12" width="11" height="11" rx="1.5" fill="#2a9a3a"/><path d="M17.5 14v7M14 17.5h7" stroke="#fff" stroke-width="2"/></svg>
<svg style="left:543px;top:1015px" width="5" height="18" viewBox="0 0 5 18"><g fill="#c2c2c2"><rect x="0" y="0" width="1.3" height="1.3"/><rect x="3" y="0" width="1.3" height="1.3"/><rect x="0" y="3" width="1.3" height="1.3"/><rect x="3" y="3" width="1.3" height="1.3"/><rect x="0" y="6" width="1.3" height="1.3"/><rect x="3" y="6" width="1.3" height="1.3"/><rect x="0" y="9" width="1.3" height="1.3"/><rect x="3" y="9" width="1.3" height="1.3"/><rect x="0" y="12" width="1.3" height="1.3"/><rect x="3" y="12" width="1.3" height="1.3"/><rect x="0" y="15" width="1.3" height="1.3"/><rect x="3" y="15" width="1.3" height="1.3"/></g></svg>
<svg style="left:560px;top:1015px" width="5" height="18" viewBox="0 0 5 18"><g fill="#c2c2c2"><rect x="0" y="0" width="1.3" height="1.3"/><rect x="3" y="0" width="1.3" height="1.3"/><rect x="0" y="3" width="1.3" height="1.3"/><rect x="3" y="3" width="1.3" height="1.3"/><rect x="0" y="6" width="1.3" height="1.3"/><rect x="3" y="6" width="1.3" height="1.3"/><rect x="0" y="9" width="1.3" height="1.3"/><rect x="3" y="9" width="1.3" height="1.3"/><rect x="0" y="12" width="1.3" height="1.3"/><rect x="3" y="12" width="1.3" height="1.3"/><rect x="0" y="15" width="1.3" height="1.3"/><rect x="3" y="15" width="1.3" height="1.3"/></g></svg>
<svg style="left:572px;top:1011px" width="24" height="24" viewBox="0 0 24 24"><circle cx="12" cy="12" r="11" fill="#4cae4c"/><g fill="#fff"><circle cx="8" cy="12" r="2.3"/><circle cx="15.5" cy="7.5" r="2.3"/><circle cx="15.5" cy="16.5" r="2.3"/></g><path d="M8 12l7.5-4.5M8 12l7.5 4.5" stroke="#fff" stroke-width="1.4"/></svg>
<svg style="left:13px;top:1053px" width="14" height="14" viewBox="0 0 14 14"><circle cx="5.5" cy="5.5" r="4.2" fill="none" stroke="#888" stroke-width="1.4"/><path d="M8.5 8.5L12.5 12.5" stroke="#888" stroke-width="1.6"/></svg>
<svg style="left:1131px;top:1053px" width="18" height="18" viewBox="0 0 18 18"><path d="M4 2c3-2 8 0 10 3l-2 10c-2 2-6 2-8 0l-3-9c0-2 1-3 3-4z" fill="#e8e8e8" stroke="#333" stroke-width="1.2"/><path d="M6 4l2 6M10 4l-1 5" stroke="#333"/><circle cx="9" cy="12" r="2.5" fill="none" stroke="#333"/><path d="M13 3l4-3" stroke="#333"/></svg>
<svg style="left:1298px;top:1059px" width="8" height="5" viewBox="0 0 8 5"><path d="M0 0H8L4 4.5Z" fill="#555"/></svg>
<svg style="left:1324px;top:1053px" width="14" height="17" viewBox="0 0 14 17"><path d="M3.5 8V5.5a3.5 3.5 0 0 1 7 0V8" fill="none" stroke="#666" stroke-width="2"/><rect x="1" y="8" width="12" height="8.5" rx="1.5" fill="#666"/></svg>
</body></html>
